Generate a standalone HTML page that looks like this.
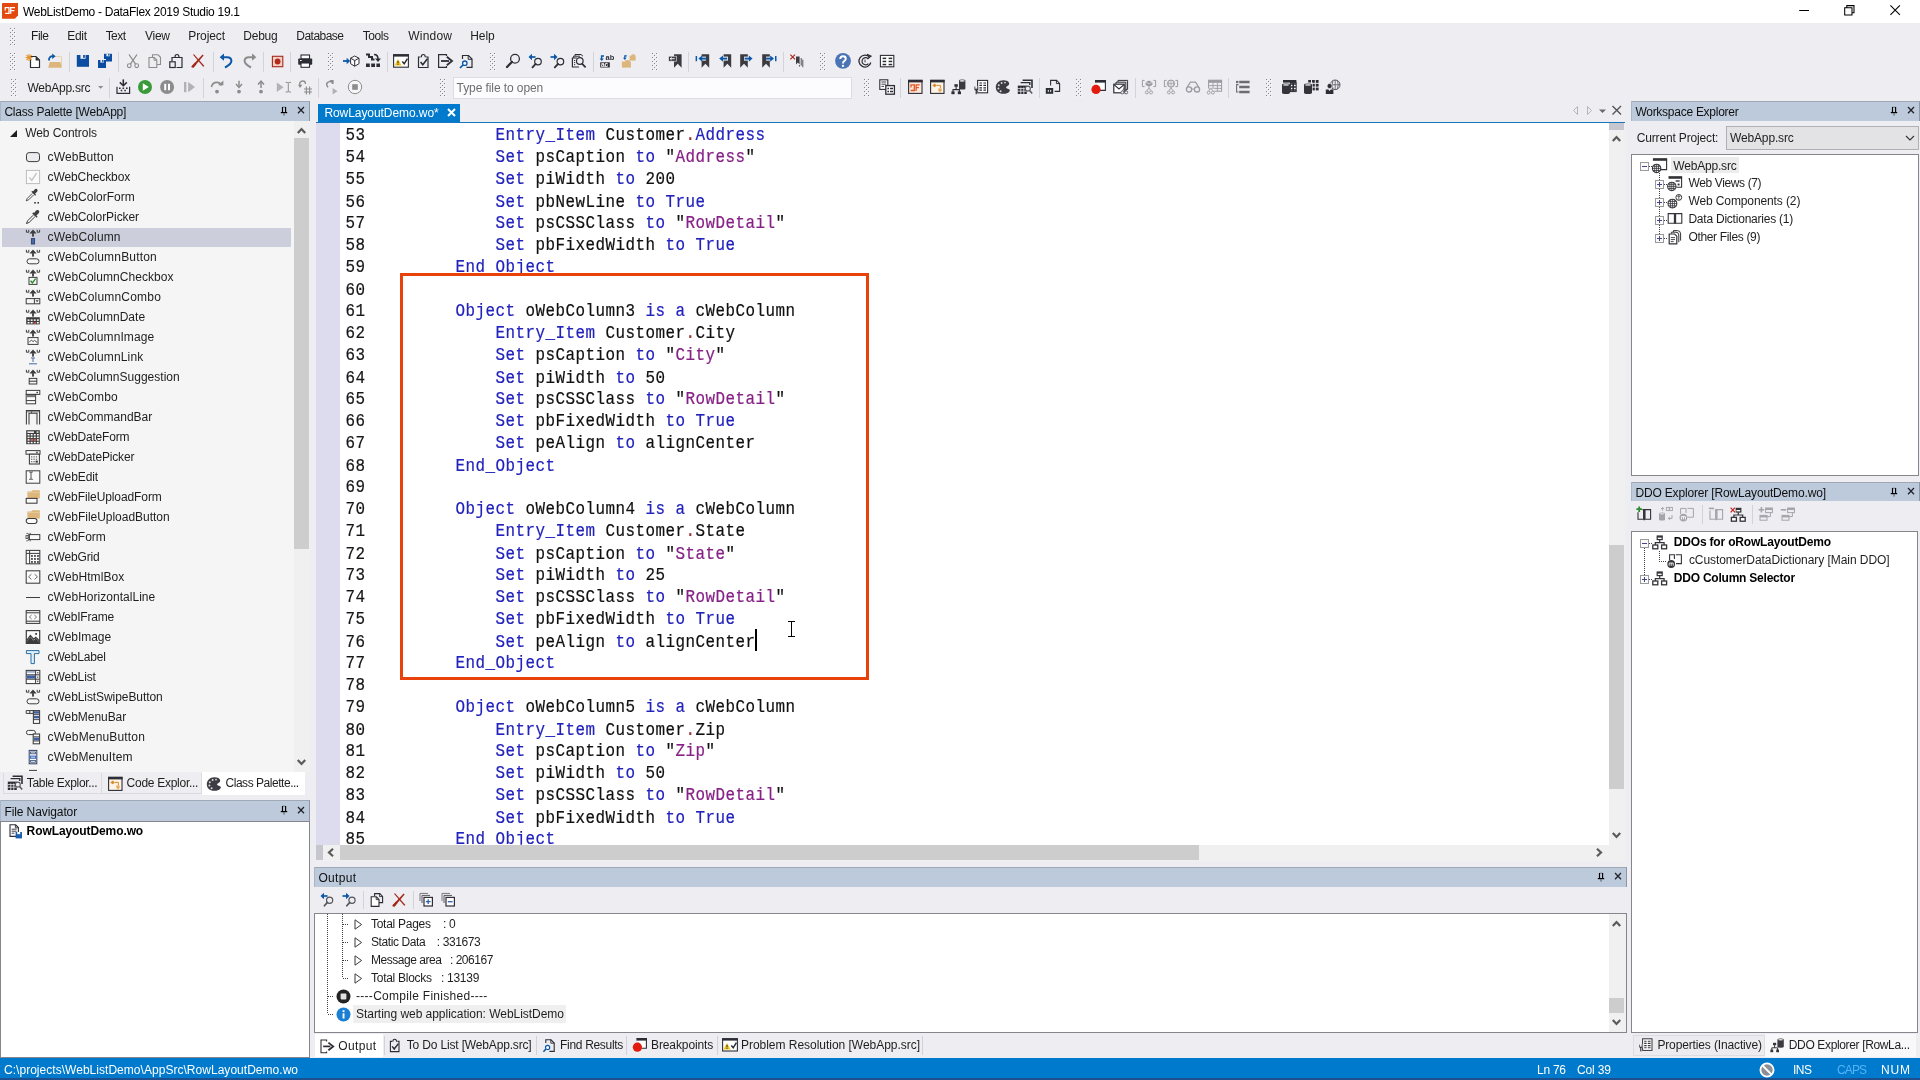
<!DOCTYPE html>
<html><head><meta charset="utf-8"><title>WebListDemo - DataFlex 2019 Studio 19.1</title>
<style>
html,body{margin:0;padding:0;}
body{width:1920px;height:1080px;overflow:hidden;position:relative;background:#eeeef2;font-family:"Liberation Sans",sans-serif;}
#r{position:absolute;left:0;top:0;width:1920px;height:1080px;will-change:transform;}
#r>div,#r>span,#r>svg{position:absolute;}
span{white-space:pre;display:block;}
svg{overflow:visible;}
</style></head><body><div id="r">
<div style="left:0px;top:0px;width:1920px;height:23px;background:#ffffff;"></div>
<svg style="left:2px;top:3px;" width="16" height="16" viewBox="0 0 16 16"><path d="M0 0.6Q0 0 0.6 0H16V12.6L12.8 15.8H0Z" fill="#e2490f"/><path d="M3.2 7.4V4.6H7V10.4H3.2M8.7 10.8V4.6H13M8.7 7.6H12.4" stroke="#fff" stroke-width="1.25" fill="none"/></svg>
<span style="left:23px;top:3.50px;font-size:12px;line-height:16px;color:#000;letter-spacing:-0.286px;">WebListDemo - DataFlex 2019 Studio 19.1</span>
<svg style="left:1799px;top:5px;" width="11" height="11" viewBox="0 0 11 11"><path d="M0.2 5.5H10" stroke="#000" stroke-width="1"/></svg>
<svg style="left:1844px;top:5px;" width="11" height="11" viewBox="0 0 11 11"><path d="M0.7 2.7H8V10H0.7Z M2.8 2.7V0.6H10V7.8H8" stroke="#000" stroke-width="1.05" fill="none"/></svg>
<svg style="left:1890px;top:5px;" width="11" height="11" viewBox="0 0 11 11"><path d="M0.4 0.3L9.9 9.9M9.9 0.3L0.4 9.9" stroke="#000" stroke-width="1.05"/></svg>
<svg style="left:10px;top:28px;" width="6" height="18" viewBox="0 0 6 18"><rect x="0" y="0" width="1" height="1" fill="#85858a"/><rect x="1" y="1" width="1" height="1" fill="#fafafc"/><rect x="4" y="0" width="1" height="1" fill="#85858a"/><rect x="5" y="1" width="1" height="1" fill="#fafafc"/><rect x="2" y="2" width="1" height="1" fill="#85858a"/><rect x="3" y="3" width="1" height="1" fill="#fafafc"/><rect x="0" y="4" width="1" height="1" fill="#85858a"/><rect x="1" y="5" width="1" height="1" fill="#fafafc"/><rect x="4" y="4" width="1" height="1" fill="#85858a"/><rect x="5" y="5" width="1" height="1" fill="#fafafc"/><rect x="2" y="6" width="1" height="1" fill="#85858a"/><rect x="3" y="7" width="1" height="1" fill="#fafafc"/><rect x="0" y="8" width="1" height="1" fill="#85858a"/><rect x="1" y="9" width="1" height="1" fill="#fafafc"/><rect x="4" y="8" width="1" height="1" fill="#85858a"/><rect x="5" y="9" width="1" height="1" fill="#fafafc"/><rect x="2" y="10" width="1" height="1" fill="#85858a"/><rect x="3" y="11" width="1" height="1" fill="#fafafc"/><rect x="0" y="12" width="1" height="1" fill="#85858a"/><rect x="1" y="13" width="1" height="1" fill="#fafafc"/><rect x="4" y="12" width="1" height="1" fill="#85858a"/><rect x="5" y="13" width="1" height="1" fill="#fafafc"/><rect x="2" y="14" width="1" height="1" fill="#85858a"/><rect x="3" y="15" width="1" height="1" fill="#fafafc"/><rect x="0" y="16" width="1" height="1" fill="#85858a"/><rect x="1" y="17" width="1" height="1" fill="#fafafc"/><rect x="4" y="16" width="1" height="1" fill="#85858a"/><rect x="5" y="17" width="1" height="1" fill="#fafafc"/></svg>
<span style="left:31px;top:27.50px;font-size:12px;line-height:16px;color:#1e1e1e;letter-spacing:-0.445px;">File</span>
<span style="left:67.3px;top:27.50px;font-size:12px;line-height:16px;color:#1e1e1e;letter-spacing:-0.326px;">Edit</span>
<span style="left:105.7px;top:27.50px;font-size:12px;line-height:16px;color:#1e1e1e;letter-spacing:-0.569px;">Text</span>
<span style="left:145px;top:27.50px;font-size:12px;line-height:16px;color:#1e1e1e;letter-spacing:-0.264px;">View</span>
<span style="left:188.3px;top:27.50px;font-size:12px;line-height:16px;color:#1e1e1e;letter-spacing:-0.108px;">Project</span>
<span style="left:243.3px;top:27.50px;font-size:12px;line-height:16px;color:#1e1e1e;letter-spacing:-0.240px;">Debug</span>
<span style="left:296.3px;top:27.50px;font-size:12px;line-height:16px;color:#1e1e1e;letter-spacing:-0.524px;">Database</span>
<span style="left:362.7px;top:27.50px;font-size:12px;line-height:16px;color:#1e1e1e;letter-spacing:-0.428px;">Tools</span>
<span style="left:408.3px;top:27.50px;font-size:12px;line-height:16px;color:#1e1e1e;letter-spacing:0.204px;">Window</span>
<span style="left:470.3px;top:27.50px;font-size:12px;line-height:16px;color:#1e1e1e;letter-spacing:-0.093px;">Help</span>
<svg style="left:10px;top:53px;" width="6" height="18" viewBox="0 0 6 18"><rect x="0" y="0" width="1" height="1" fill="#85858a"/><rect x="1" y="1" width="1" height="1" fill="#fafafc"/><rect x="4" y="0" width="1" height="1" fill="#85858a"/><rect x="5" y="1" width="1" height="1" fill="#fafafc"/><rect x="2" y="2" width="1" height="1" fill="#85858a"/><rect x="3" y="3" width="1" height="1" fill="#fafafc"/><rect x="0" y="4" width="1" height="1" fill="#85858a"/><rect x="1" y="5" width="1" height="1" fill="#fafafc"/><rect x="4" y="4" width="1" height="1" fill="#85858a"/><rect x="5" y="5" width="1" height="1" fill="#fafafc"/><rect x="2" y="6" width="1" height="1" fill="#85858a"/><rect x="3" y="7" width="1" height="1" fill="#fafafc"/><rect x="0" y="8" width="1" height="1" fill="#85858a"/><rect x="1" y="9" width="1" height="1" fill="#fafafc"/><rect x="4" y="8" width="1" height="1" fill="#85858a"/><rect x="5" y="9" width="1" height="1" fill="#fafafc"/><rect x="2" y="10" width="1" height="1" fill="#85858a"/><rect x="3" y="11" width="1" height="1" fill="#fafafc"/><rect x="0" y="12" width="1" height="1" fill="#85858a"/><rect x="1" y="13" width="1" height="1" fill="#fafafc"/><rect x="4" y="12" width="1" height="1" fill="#85858a"/><rect x="5" y="13" width="1" height="1" fill="#fafafc"/><rect x="2" y="14" width="1" height="1" fill="#85858a"/><rect x="3" y="15" width="1" height="1" fill="#fafafc"/><rect x="0" y="16" width="1" height="1" fill="#85858a"/><rect x="1" y="17" width="1" height="1" fill="#fafafc"/><rect x="4" y="16" width="1" height="1" fill="#85858a"/><rect x="5" y="17" width="1" height="1" fill="#fafafc"/></svg>
<svg style="left:328px;top:53px;" width="6" height="18" viewBox="0 0 6 18"><rect x="0" y="0" width="1" height="1" fill="#85858a"/><rect x="1" y="1" width="1" height="1" fill="#fafafc"/><rect x="4" y="0" width="1" height="1" fill="#85858a"/><rect x="5" y="1" width="1" height="1" fill="#fafafc"/><rect x="2" y="2" width="1" height="1" fill="#85858a"/><rect x="3" y="3" width="1" height="1" fill="#fafafc"/><rect x="0" y="4" width="1" height="1" fill="#85858a"/><rect x="1" y="5" width="1" height="1" fill="#fafafc"/><rect x="4" y="4" width="1" height="1" fill="#85858a"/><rect x="5" y="5" width="1" height="1" fill="#fafafc"/><rect x="2" y="6" width="1" height="1" fill="#85858a"/><rect x="3" y="7" width="1" height="1" fill="#fafafc"/><rect x="0" y="8" width="1" height="1" fill="#85858a"/><rect x="1" y="9" width="1" height="1" fill="#fafafc"/><rect x="4" y="8" width="1" height="1" fill="#85858a"/><rect x="5" y="9" width="1" height="1" fill="#fafafc"/><rect x="2" y="10" width="1" height="1" fill="#85858a"/><rect x="3" y="11" width="1" height="1" fill="#fafafc"/><rect x="0" y="12" width="1" height="1" fill="#85858a"/><rect x="1" y="13" width="1" height="1" fill="#fafafc"/><rect x="4" y="12" width="1" height="1" fill="#85858a"/><rect x="5" y="13" width="1" height="1" fill="#fafafc"/><rect x="2" y="14" width="1" height="1" fill="#85858a"/><rect x="3" y="15" width="1" height="1" fill="#fafafc"/><rect x="0" y="16" width="1" height="1" fill="#85858a"/><rect x="1" y="17" width="1" height="1" fill="#fafafc"/><rect x="4" y="16" width="1" height="1" fill="#85858a"/><rect x="5" y="17" width="1" height="1" fill="#fafafc"/></svg>
<svg style="left:490px;top:53px;" width="6" height="18" viewBox="0 0 6 18"><rect x="0" y="0" width="1" height="1" fill="#85858a"/><rect x="1" y="1" width="1" height="1" fill="#fafafc"/><rect x="4" y="0" width="1" height="1" fill="#85858a"/><rect x="5" y="1" width="1" height="1" fill="#fafafc"/><rect x="2" y="2" width="1" height="1" fill="#85858a"/><rect x="3" y="3" width="1" height="1" fill="#fafafc"/><rect x="0" y="4" width="1" height="1" fill="#85858a"/><rect x="1" y="5" width="1" height="1" fill="#fafafc"/><rect x="4" y="4" width="1" height="1" fill="#85858a"/><rect x="5" y="5" width="1" height="1" fill="#fafafc"/><rect x="2" y="6" width="1" height="1" fill="#85858a"/><rect x="3" y="7" width="1" height="1" fill="#fafafc"/><rect x="0" y="8" width="1" height="1" fill="#85858a"/><rect x="1" y="9" width="1" height="1" fill="#fafafc"/><rect x="4" y="8" width="1" height="1" fill="#85858a"/><rect x="5" y="9" width="1" height="1" fill="#fafafc"/><rect x="2" y="10" width="1" height="1" fill="#85858a"/><rect x="3" y="11" width="1" height="1" fill="#fafafc"/><rect x="0" y="12" width="1" height="1" fill="#85858a"/><rect x="1" y="13" width="1" height="1" fill="#fafafc"/><rect x="4" y="12" width="1" height="1" fill="#85858a"/><rect x="5" y="13" width="1" height="1" fill="#fafafc"/><rect x="2" y="14" width="1" height="1" fill="#85858a"/><rect x="3" y="15" width="1" height="1" fill="#fafafc"/><rect x="0" y="16" width="1" height="1" fill="#85858a"/><rect x="1" y="17" width="1" height="1" fill="#fafafc"/><rect x="4" y="16" width="1" height="1" fill="#85858a"/><rect x="5" y="17" width="1" height="1" fill="#fafafc"/></svg>
<svg style="left:652px;top:53px;" width="6" height="18" viewBox="0 0 6 18"><rect x="0" y="0" width="1" height="1" fill="#85858a"/><rect x="1" y="1" width="1" height="1" fill="#fafafc"/><rect x="4" y="0" width="1" height="1" fill="#85858a"/><rect x="5" y="1" width="1" height="1" fill="#fafafc"/><rect x="2" y="2" width="1" height="1" fill="#85858a"/><rect x="3" y="3" width="1" height="1" fill="#fafafc"/><rect x="0" y="4" width="1" height="1" fill="#85858a"/><rect x="1" y="5" width="1" height="1" fill="#fafafc"/><rect x="4" y="4" width="1" height="1" fill="#85858a"/><rect x="5" y="5" width="1" height="1" fill="#fafafc"/><rect x="2" y="6" width="1" height="1" fill="#85858a"/><rect x="3" y="7" width="1" height="1" fill="#fafafc"/><rect x="0" y="8" width="1" height="1" fill="#85858a"/><rect x="1" y="9" width="1" height="1" fill="#fafafc"/><rect x="4" y="8" width="1" height="1" fill="#85858a"/><rect x="5" y="9" width="1" height="1" fill="#fafafc"/><rect x="2" y="10" width="1" height="1" fill="#85858a"/><rect x="3" y="11" width="1" height="1" fill="#fafafc"/><rect x="0" y="12" width="1" height="1" fill="#85858a"/><rect x="1" y="13" width="1" height="1" fill="#fafafc"/><rect x="4" y="12" width="1" height="1" fill="#85858a"/><rect x="5" y="13" width="1" height="1" fill="#fafafc"/><rect x="2" y="14" width="1" height="1" fill="#85858a"/><rect x="3" y="15" width="1" height="1" fill="#fafafc"/><rect x="0" y="16" width="1" height="1" fill="#85858a"/><rect x="1" y="17" width="1" height="1" fill="#fafafc"/><rect x="4" y="16" width="1" height="1" fill="#85858a"/><rect x="5" y="17" width="1" height="1" fill="#fafafc"/></svg>
<svg style="left:820px;top:53px;" width="6" height="18" viewBox="0 0 6 18"><rect x="0" y="0" width="1" height="1" fill="#85858a"/><rect x="1" y="1" width="1" height="1" fill="#fafafc"/><rect x="4" y="0" width="1" height="1" fill="#85858a"/><rect x="5" y="1" width="1" height="1" fill="#fafafc"/><rect x="2" y="2" width="1" height="1" fill="#85858a"/><rect x="3" y="3" width="1" height="1" fill="#fafafc"/><rect x="0" y="4" width="1" height="1" fill="#85858a"/><rect x="1" y="5" width="1" height="1" fill="#fafafc"/><rect x="4" y="4" width="1" height="1" fill="#85858a"/><rect x="5" y="5" width="1" height="1" fill="#fafafc"/><rect x="2" y="6" width="1" height="1" fill="#85858a"/><rect x="3" y="7" width="1" height="1" fill="#fafafc"/><rect x="0" y="8" width="1" height="1" fill="#85858a"/><rect x="1" y="9" width="1" height="1" fill="#fafafc"/><rect x="4" y="8" width="1" height="1" fill="#85858a"/><rect x="5" y="9" width="1" height="1" fill="#fafafc"/><rect x="2" y="10" width="1" height="1" fill="#85858a"/><rect x="3" y="11" width="1" height="1" fill="#fafafc"/><rect x="0" y="12" width="1" height="1" fill="#85858a"/><rect x="1" y="13" width="1" height="1" fill="#fafafc"/><rect x="4" y="12" width="1" height="1" fill="#85858a"/><rect x="5" y="13" width="1" height="1" fill="#fafafc"/><rect x="2" y="14" width="1" height="1" fill="#85858a"/><rect x="3" y="15" width="1" height="1" fill="#fafafc"/><rect x="0" y="16" width="1" height="1" fill="#85858a"/><rect x="1" y="17" width="1" height="1" fill="#fafafc"/><rect x="4" y="16" width="1" height="1" fill="#85858a"/><rect x="5" y="17" width="1" height="1" fill="#fafafc"/></svg>
<svg style="left:11px;top:79px;" width="6" height="18" viewBox="0 0 6 18"><rect x="0" y="0" width="1" height="1" fill="#85858a"/><rect x="1" y="1" width="1" height="1" fill="#fafafc"/><rect x="4" y="0" width="1" height="1" fill="#85858a"/><rect x="5" y="1" width="1" height="1" fill="#fafafc"/><rect x="2" y="2" width="1" height="1" fill="#85858a"/><rect x="3" y="3" width="1" height="1" fill="#fafafc"/><rect x="0" y="4" width="1" height="1" fill="#85858a"/><rect x="1" y="5" width="1" height="1" fill="#fafafc"/><rect x="4" y="4" width="1" height="1" fill="#85858a"/><rect x="5" y="5" width="1" height="1" fill="#fafafc"/><rect x="2" y="6" width="1" height="1" fill="#85858a"/><rect x="3" y="7" width="1" height="1" fill="#fafafc"/><rect x="0" y="8" width="1" height="1" fill="#85858a"/><rect x="1" y="9" width="1" height="1" fill="#fafafc"/><rect x="4" y="8" width="1" height="1" fill="#85858a"/><rect x="5" y="9" width="1" height="1" fill="#fafafc"/><rect x="2" y="10" width="1" height="1" fill="#85858a"/><rect x="3" y="11" width="1" height="1" fill="#fafafc"/><rect x="0" y="12" width="1" height="1" fill="#85858a"/><rect x="1" y="13" width="1" height="1" fill="#fafafc"/><rect x="4" y="12" width="1" height="1" fill="#85858a"/><rect x="5" y="13" width="1" height="1" fill="#fafafc"/><rect x="2" y="14" width="1" height="1" fill="#85858a"/><rect x="3" y="15" width="1" height="1" fill="#fafafc"/><rect x="0" y="16" width="1" height="1" fill="#85858a"/><rect x="1" y="17" width="1" height="1" fill="#fafafc"/><rect x="4" y="16" width="1" height="1" fill="#85858a"/><rect x="5" y="17" width="1" height="1" fill="#fafafc"/></svg>
<svg style="left:440px;top:79px;" width="6" height="18" viewBox="0 0 6 18"><rect x="0" y="0" width="1" height="1" fill="#85858a"/><rect x="1" y="1" width="1" height="1" fill="#fafafc"/><rect x="4" y="0" width="1" height="1" fill="#85858a"/><rect x="5" y="1" width="1" height="1" fill="#fafafc"/><rect x="2" y="2" width="1" height="1" fill="#85858a"/><rect x="3" y="3" width="1" height="1" fill="#fafafc"/><rect x="0" y="4" width="1" height="1" fill="#85858a"/><rect x="1" y="5" width="1" height="1" fill="#fafafc"/><rect x="4" y="4" width="1" height="1" fill="#85858a"/><rect x="5" y="5" width="1" height="1" fill="#fafafc"/><rect x="2" y="6" width="1" height="1" fill="#85858a"/><rect x="3" y="7" width="1" height="1" fill="#fafafc"/><rect x="0" y="8" width="1" height="1" fill="#85858a"/><rect x="1" y="9" width="1" height="1" fill="#fafafc"/><rect x="4" y="8" width="1" height="1" fill="#85858a"/><rect x="5" y="9" width="1" height="1" fill="#fafafc"/><rect x="2" y="10" width="1" height="1" fill="#85858a"/><rect x="3" y="11" width="1" height="1" fill="#fafafc"/><rect x="0" y="12" width="1" height="1" fill="#85858a"/><rect x="1" y="13" width="1" height="1" fill="#fafafc"/><rect x="4" y="12" width="1" height="1" fill="#85858a"/><rect x="5" y="13" width="1" height="1" fill="#fafafc"/><rect x="2" y="14" width="1" height="1" fill="#85858a"/><rect x="3" y="15" width="1" height="1" fill="#fafafc"/><rect x="0" y="16" width="1" height="1" fill="#85858a"/><rect x="1" y="17" width="1" height="1" fill="#fafafc"/><rect x="4" y="16" width="1" height="1" fill="#85858a"/><rect x="5" y="17" width="1" height="1" fill="#fafafc"/></svg>
<svg style="left:864px;top:79px;" width="6" height="18" viewBox="0 0 6 18"><rect x="0" y="0" width="1" height="1" fill="#85858a"/><rect x="1" y="1" width="1" height="1" fill="#fafafc"/><rect x="4" y="0" width="1" height="1" fill="#85858a"/><rect x="5" y="1" width="1" height="1" fill="#fafafc"/><rect x="2" y="2" width="1" height="1" fill="#85858a"/><rect x="3" y="3" width="1" height="1" fill="#fafafc"/><rect x="0" y="4" width="1" height="1" fill="#85858a"/><rect x="1" y="5" width="1" height="1" fill="#fafafc"/><rect x="4" y="4" width="1" height="1" fill="#85858a"/><rect x="5" y="5" width="1" height="1" fill="#fafafc"/><rect x="2" y="6" width="1" height="1" fill="#85858a"/><rect x="3" y="7" width="1" height="1" fill="#fafafc"/><rect x="0" y="8" width="1" height="1" fill="#85858a"/><rect x="1" y="9" width="1" height="1" fill="#fafafc"/><rect x="4" y="8" width="1" height="1" fill="#85858a"/><rect x="5" y="9" width="1" height="1" fill="#fafafc"/><rect x="2" y="10" width="1" height="1" fill="#85858a"/><rect x="3" y="11" width="1" height="1" fill="#fafafc"/><rect x="0" y="12" width="1" height="1" fill="#85858a"/><rect x="1" y="13" width="1" height="1" fill="#fafafc"/><rect x="4" y="12" width="1" height="1" fill="#85858a"/><rect x="5" y="13" width="1" height="1" fill="#fafafc"/><rect x="2" y="14" width="1" height="1" fill="#85858a"/><rect x="3" y="15" width="1" height="1" fill="#fafafc"/><rect x="0" y="16" width="1" height="1" fill="#85858a"/><rect x="1" y="17" width="1" height="1" fill="#fafafc"/><rect x="4" y="16" width="1" height="1" fill="#85858a"/><rect x="5" y="17" width="1" height="1" fill="#fafafc"/></svg>
<svg style="left:1076px;top:79px;" width="6" height="18" viewBox="0 0 6 18"><rect x="0" y="0" width="1" height="1" fill="#85858a"/><rect x="1" y="1" width="1" height="1" fill="#fafafc"/><rect x="4" y="0" width="1" height="1" fill="#85858a"/><rect x="5" y="1" width="1" height="1" fill="#fafafc"/><rect x="2" y="2" width="1" height="1" fill="#85858a"/><rect x="3" y="3" width="1" height="1" fill="#fafafc"/><rect x="0" y="4" width="1" height="1" fill="#85858a"/><rect x="1" y="5" width="1" height="1" fill="#fafafc"/><rect x="4" y="4" width="1" height="1" fill="#85858a"/><rect x="5" y="5" width="1" height="1" fill="#fafafc"/><rect x="2" y="6" width="1" height="1" fill="#85858a"/><rect x="3" y="7" width="1" height="1" fill="#fafafc"/><rect x="0" y="8" width="1" height="1" fill="#85858a"/><rect x="1" y="9" width="1" height="1" fill="#fafafc"/><rect x="4" y="8" width="1" height="1" fill="#85858a"/><rect x="5" y="9" width="1" height="1" fill="#fafafc"/><rect x="2" y="10" width="1" height="1" fill="#85858a"/><rect x="3" y="11" width="1" height="1" fill="#fafafc"/><rect x="0" y="12" width="1" height="1" fill="#85858a"/><rect x="1" y="13" width="1" height="1" fill="#fafafc"/><rect x="4" y="12" width="1" height="1" fill="#85858a"/><rect x="5" y="13" width="1" height="1" fill="#fafafc"/><rect x="2" y="14" width="1" height="1" fill="#85858a"/><rect x="3" y="15" width="1" height="1" fill="#fafafc"/><rect x="0" y="16" width="1" height="1" fill="#85858a"/><rect x="1" y="17" width="1" height="1" fill="#fafafc"/><rect x="4" y="16" width="1" height="1" fill="#85858a"/><rect x="5" y="17" width="1" height="1" fill="#fafafc"/></svg>
<svg style="left:1266px;top:79px;" width="6" height="18" viewBox="0 0 6 18"><rect x="0" y="0" width="1" height="1" fill="#85858a"/><rect x="1" y="1" width="1" height="1" fill="#fafafc"/><rect x="4" y="0" width="1" height="1" fill="#85858a"/><rect x="5" y="1" width="1" height="1" fill="#fafafc"/><rect x="2" y="2" width="1" height="1" fill="#85858a"/><rect x="3" y="3" width="1" height="1" fill="#fafafc"/><rect x="0" y="4" width="1" height="1" fill="#85858a"/><rect x="1" y="5" width="1" height="1" fill="#fafafc"/><rect x="4" y="4" width="1" height="1" fill="#85858a"/><rect x="5" y="5" width="1" height="1" fill="#fafafc"/><rect x="2" y="6" width="1" height="1" fill="#85858a"/><rect x="3" y="7" width="1" height="1" fill="#fafafc"/><rect x="0" y="8" width="1" height="1" fill="#85858a"/><rect x="1" y="9" width="1" height="1" fill="#fafafc"/><rect x="4" y="8" width="1" height="1" fill="#85858a"/><rect x="5" y="9" width="1" height="1" fill="#fafafc"/><rect x="2" y="10" width="1" height="1" fill="#85858a"/><rect x="3" y="11" width="1" height="1" fill="#fafafc"/><rect x="0" y="12" width="1" height="1" fill="#85858a"/><rect x="1" y="13" width="1" height="1" fill="#fafafc"/><rect x="4" y="12" width="1" height="1" fill="#85858a"/><rect x="5" y="13" width="1" height="1" fill="#fafafc"/><rect x="2" y="14" width="1" height="1" fill="#85858a"/><rect x="3" y="15" width="1" height="1" fill="#fafafc"/><rect x="0" y="16" width="1" height="1" fill="#85858a"/><rect x="1" y="17" width="1" height="1" fill="#fafafc"/><rect x="4" y="16" width="1" height="1" fill="#85858a"/><rect x="5" y="17" width="1" height="1" fill="#fafafc"/></svg>
<div style="left:68.5px;top:52px;width:1px;height:20px;background:#d3d3da;"></div>
<div style="left:118.3px;top:52px;width:1px;height:20px;background:#d3d3da;"></div>
<div style="left:212.5px;top:52px;width:1px;height:20px;background:#d3d3da;"></div>
<div style="left:262.5px;top:52px;width:1px;height:20px;background:#d3d3da;"></div>
<div style="left:290.4px;top:52px;width:1px;height:20px;background:#d3d3da;"></div>
<div style="left:386.6px;top:52px;width:1px;height:20px;background:#d3d3da;"></div>
<div style="left:592.6px;top:52px;width:1px;height:20px;background:#d3d3da;"></div>
<div style="left:688.4px;top:52px;width:1px;height:20px;background:#d3d3da;"></div>
<div style="left:782.5px;top:52px;width:1px;height:20px;background:#d3d3da;"></div>
<div style="left:108.5px;top:78.4px;width:1px;height:20px;background:#d3d3da;"></div>
<div style="left:202.8px;top:78.4px;width:1px;height:20px;background:#d3d3da;"></div>
<div style="left:318.4px;top:78.4px;width:1px;height:20px;background:#d3d3da;"></div>
<div style="left:900.4px;top:78.4px;width:1px;height:20px;background:#d3d3da;"></div>
<div style="left:1038.5px;top:78.4px;width:1px;height:20px;background:#d3d3da;"></div>
<div style="left:1134.5px;top:78.4px;width:1px;height:20px;background:#d3d3da;"></div>
<div style="left:1228.4px;top:78.4px;width:1px;height:20px;background:#d3d3da;"></div>
<svg style="left:25px;top:53px;" width="16" height="16" viewBox="0 0 16 16"><path d="M5.5 3.5H11L14.5 7V14.5H5.5Z" fill="#fff" stroke="#2d2d36" stroke-width="1.2"/><path d="M10.6 3.5V7.4H14.5Z" fill="#2d2d36"/><path d="M4 1V8M0.5 4.5H7.5M1.5 2L6.5 7M6.5 2L1.5 7" stroke="#e8952f" stroke-width="1.1"/></svg>
<svg style="left:47px;top:53px;" width="16" height="16" viewBox="0 0 16 16"><path d="M7.5 3.5H14.5V13.5" fill="none" stroke="#e9d3a8" stroke-width="1"/><path d="M1.2 14.7L2.6 9H13.4L14.8 14.7Z" fill="#dcb67a"/><path d="M2 7.5Q1.6 3.2 6 3.2" fill="none" stroke="#0b58a8" stroke-width="1.8"/><path d="M5.2 0.4L8.6 3.2L5.2 6Z" fill="#0b58a8"/></svg>
<svg style="left:75px;top:53px;" width="16" height="16" viewBox="0 0 16 16"><rect x="1.8" y="2" width="12.2" height="11.8" fill="#0b4da0"/><rect x="5.46" y="2" width="5.12" height="3.78" fill="#eeeef2"/><rect x="8.14" y="2" width="1.71" height="2.83" fill="#0b4da0"/></svg>
<svg style="left:97px;top:53px;" width="16" height="16" viewBox="0 0 16 16"><rect x="7" y="0.8" width="8" height="7.7" fill="#0b4da0"/><rect x="9.40" y="0.8" width="3.36" height="2.46" fill="#eeeef2"/><rect x="11.16" y="0.8" width="1.12" height="1.85" fill="#0b4da0"/><rect x="6" y="6" width="3" height="3.5" fill="#eeeef2"/><rect x="1" y="7" width="8" height="8" fill="#0b4da0"/><rect x="3.40" y="7" width="3.36" height="2.56" fill="#eeeef2"/><rect x="5.16" y="7" width="1.12" height="1.92" fill="#0b4da0"/></svg>
<svg style="left:125px;top:53px;" width="16" height="16" viewBox="0 0 16 16"><circle cx="4.3" cy="12.7" r="1.9" fill="none" stroke="#8c8c8c" stroke-width="1.1"/><circle cx="11.7" cy="12.7" r="1.9" fill="none" stroke="#8c8c8c" stroke-width="1.1"/><path d="M4 1.5L10.6 11.2M12 1.5L5.4 11.2" stroke="#8c8c8c" stroke-width="1.3" fill="none"/></svg>
<svg style="left:147px;top:53px;" width="16" height="16" viewBox="0 0 16 16"><path d="M5.5 4V1.8H11L13.5 4.3V11.5H10" fill="none" stroke="#8c8c8c" stroke-width="1.1"/><path d="M2 4.5H7.3L9.8 7V14.5H2Z" fill="none" stroke="#8c8c8c" stroke-width="1.1"/><path d="M7 4.7V7.3H9.6" fill="none" stroke="#8c8c8c" stroke-width="0.9"/></svg>
<svg style="left:168px;top:53px;" width="16" height="16" viewBox="0 0 16 16"><path d="M4 8V4.5H14V14.5H8.5" fill="none" stroke="#2d2d36" stroke-width="1.2"/><path d="M7 4.3Q7 1.5 9 1.5Q11 1.5 11 4.3" fill="none" stroke="#2d2d36" stroke-width="1.2"/><rect x="1.8" y="8.8" width="5.4" height="5.7" fill="none" stroke="#2d2d36" stroke-width="1.2"/></svg>
<svg style="left:190px;top:53px;" width="16" height="16" viewBox="0 0 16 16"><path d="M1.6 13.2L3.6 14.6L13.6 2.6L12.6 1.4Z" fill="#a5281b"/><path d="M3 1.8L4 1.2L14.4 13L13.2 13.8Z" fill="#a5281b"/><path d="M1.4 13.4Q1 14.8 3.4 14.8L6.5 11L5 9.4Z" fill="#a5281b"/></svg>
<svg style="left:219px;top:53px;" width="16" height="16" viewBox="0 0 16 16"><path d="M3 4.2H8Q12.4 4.2 12.4 8Q12.4 11 6 14.5" fill="none" stroke="#0b58a8" stroke-width="2"/><path d="M0.6 4.2L5 0.6V7.8Z" fill="#0b58a8"/></svg>
<svg style="left:241px;top:53px;transform:scaleX(-1)" width="16" height="16" viewBox="0 0 16 16"><path d="M3 4.2H8Q12.4 4.2 12.4 8Q12.4 11 6 14.5" fill="none" stroke="#8c8c8c" stroke-width="2"/><path d="M0.6 4.2L5 0.6V7.8Z" fill="#8c8c8c"/></svg>
<svg style="left:269px;top:53px;" width="16" height="16" viewBox="0 0 16 16"><rect x="3.4" y="3.3" width="10.4" height="10.4" fill="#f3cfc6" stroke="#a5281b" stroke-width="1.1"/><circle cx="8.6" cy="8.5" r="2.9" fill="#b32a1a"/></svg>
<svg style="left:297px;top:53px;" width="16" height="16" viewBox="0 0 16 16"><rect x="4" y="2" width="8.5" height="4" fill="#fff" stroke="#2d2d36" stroke-width="1.1"/><rect x="1.2" y="5.5" width="14" height="6.3" rx="0.8" fill="#2d2d36"/><rect x="4" y="10" width="8.5" height="4.3" fill="#fff" stroke="#2d2d36" stroke-width="1.1"/><rect x="3" y="7" width="1.6" height="1" fill="#fff"/></svg>
<svg style="left:343px;top:53px;" width="16" height="16" viewBox="0 0 16 16"><path d="M0 8H4.5" stroke="#0b58a8" stroke-width="1.8"/><path d="M3.6 4.8L7.2 8L3.6 11.2Z" fill="#0b58a8"/><path d="M11.7 3L16 5.2V10.7L11.7 13.2L7.6 10.7V5.2ZM7.6 5.2L11.7 7.6L16 5.2M11.7 7.6V13.2" fill="#fff" stroke="#2d2d36" stroke-width="1"/></svg>
<svg style="left:365px;top:53px;" width="16" height="16" viewBox="0 0 16 16"><path d="M1 1.5H4V4H7V6.5H9.5" fill="none" stroke="#2d2d36" stroke-width="2"/><path d="M9 1.5Q13 1.5 13 6" fill="none" stroke="#2d2d36" stroke-width="1.6"/><path d="M10 5.5H16L13 9Z" fill="#2d2d36"/><path d="M1 12.3H15" stroke="#2d2d36" stroke-width="3.4" stroke-dasharray="3.8 1.4"/></svg>
<svg style="left:393px;top:53px;" width="16" height="16" viewBox="0 0 16 16"><rect x="0.6" y="1.8" width="14.8" height="12.4" fill="#fff" stroke="#2d2d36" stroke-width="1.1"/><rect x="0" y="1.2" width="16" height="2.4" fill="#2d2d36"/><path d="M5 6L8.6 12.5H1.4Z" fill="#f2c21a"/><rect x="4.5" y="7.8" width="1" height="2.4" fill="#2d2d36"/><rect x="4.5" y="10.8" width="1" height="1" fill="#2d2d36"/><path d="M9.3 8.6L11.2 10.8L14.4 5.6" fill="none" stroke="#2d2d36" stroke-width="1.5"/></svg>
<svg style="left:415px;top:53px;" width="16" height="16" viewBox="0 0 16 16"><path d="M5.5 4H3.5V14.5H13V4H11" fill="none" stroke="#2d2d36" stroke-width="1.2"/><path d="M6.3 4.3Q6.3 1.5 8.3 1.5Q10.3 1.5 10.3 4.3" fill="none" stroke="#2d2d36" stroke-width="1.2"/><path d="M5.6 9L7.8 11.8L12.4 5.8" fill="none" stroke="#2d2d36" stroke-width="1.6"/></svg>
<svg style="left:437px;top:53px;" width="16" height="16" viewBox="0 0 16 16"><path d="M9.5 3V1.6H1.6V14.4H9.5V13" fill="none" stroke="#2d2d36" stroke-width="1.2"/><path d="M4 8H12" stroke="#2d2d36" stroke-width="1.8"/><path d="M9.8 3.8L15 8L9.8 12.2" fill="none" stroke="#2d2d36" stroke-width="1.8"/></svg>
<svg style="left:458px;top:53px;" width="16" height="16" viewBox="0 0 16 16"><path d="M4.5 6V2.5H10.5L14 6V14.3H8.5" fill="none" stroke="#2d2d36" stroke-width="1.2"/><path d="M10.2 2.5V6.3H14" fill="none" stroke="#2d2d36" stroke-width="1"/><circle cx="6.8" cy="10.2" r="2.2" fill="#fff" stroke="#0b58a8" stroke-width="1.3"/><path d="M5 12L2 15" stroke="#0b58a8" stroke-width="1.7"/></svg>
<svg style="left:505px;top:53px;" width="16" height="16" viewBox="0 0 16 16"><circle cx="10" cy="5.8" r="4.4" fill="none" stroke="#2d2d36" stroke-width="1.3"/><path d="M6.9 8.9L2 14" stroke="#2d2d36" stroke-width="2.2" stroke-linecap="round"/></svg>
<svg style="left:528px;top:53px;" width="16" height="16" viewBox="0 0 16 16"><path d="M3 4H7.5" stroke="#0b58a8" stroke-width="1.7"/><path d="M0.5 4L4 0.8V7.2Z" fill="#0b58a8"/><circle cx="10" cy="8.6" r="3.3" fill="none" stroke="#2d2d36" stroke-width="1.2"/><path d="M7.7 10.9L4.5 14.3" stroke="#2d2d36" stroke-width="1.8" stroke-linecap="round"/></svg>
<svg style="left:550px;top:53px;" width="16" height="16" viewBox="0 0 16 16"><path d="M0.5 4H5" stroke="#0b58a8" stroke-width="1.7"/><path d="M7.5 4L4 0.8V7.2Z" fill="#0b58a8"/><circle cx="10.4" cy="8.6" r="3.3" fill="none" stroke="#2d2d36" stroke-width="1.2"/><path d="M8.1 10.9L4.8 14.3" stroke="#2d2d36" stroke-width="1.8" stroke-linecap="round"/></svg>
<svg style="left:571px;top:53px;" width="16" height="16" viewBox="0 0 16 16"><path d="M4 3V1.5H10L12 3.2" fill="none" stroke="#2d2d36" stroke-width="1"/><path d="M2.6 5V3.2H9" fill="none" stroke="#2d2d36" stroke-width="1"/><path d="M6 5H1.4V14H8" fill="none" stroke="#2d2d36" stroke-width="1.2"/><path d="M3 7.5H4.2M3 9.6H4.2M3 11.7H4.2" stroke="#2d2d36" stroke-width="1"/><circle cx="8.8" cy="8" r="3.3" fill="#eeeef2" stroke="#2d2d36" stroke-width="1.2"/><path d="M11 10.6L14.6 14.4" stroke="#2d2d36" stroke-width="1.7"/></svg>
<svg style="left:599px;top:53px;" width="16" height="16" viewBox="0 0 16 16"><path d="M5 3H2.6V6.5" fill="none" stroke="#0b58a8" stroke-width="1.4"/><path d="M0.6 5.6H4.8L2.7 8Z" fill="#0b58a8"/><text x="6.6" y="6.6" font-size="7.5" font-weight="bold" font-family="Liberation Sans" fill="#2d2d36">ab</text><rect x="1.2" y="9.3" width="9.6" height="5.2" fill="#2d2d36"/><text x="2" y="14" font-size="6.5" font-weight="bold" font-family="Liberation Sans" fill="#fff">ac</text></svg>
<svg style="left:621px;top:53px;" width="16" height="16" viewBox="0 0 16 16"><rect x="8.6" y="2.6" width="6" height="5" fill="#dcb67a"/><rect x="10.6" y="1.4" width="3.4" height="1.6" fill="#dcb67a"/><rect x="0.9" y="8.6" width="9" height="6" fill="#dcb67a"/><rect x="4" y="7.2" width="5" height="1.8" fill="#dcb67a"/><path d="M5.8 2.8H3.8V5.8" fill="none" stroke="#0b58a8" stroke-width="1.2"/><path d="M2 4.8H5.6L3.8 7Z" fill="#0b58a8"/></svg>
<svg style="left:667px;top:53px;" width="16" height="16" viewBox="0 0 16 16"><path d="M7 1.2H14.6V14.8L10.8 10.8L7 14.8Z" fill="#3a3a40"/><rect x="1.6" y="3.2" width="8" height="5" fill="#3a3a40" stroke="#eeeef2" stroke-width="0.6"/><path d="M3 5.7H7.8M4.8 4.4L3.2 5.7L4.8 7" stroke="#fff" stroke-width="0.9" fill="none"/></svg>
<svg style="left:695px;top:53px;" width="16" height="16" viewBox="0 0 16 16"><path d="M6.6 1.2H14.2V14.8L10.399999999999999 10.8L6.6 14.8Z" fill="#3a3a40"/><rect x="4" y="3.6" width="7" height="4" fill="#eeeef2"/><path d="M6.4 5.6H11.4" stroke="#0b58a8" stroke-width="1.9"/><path d="M3.4 5.6L7.199999999999999 2.4V8.8Z" fill="#0b58a8"/><rect x="0.6" y="3" width="1.5" height="5.2" fill="#0b58a8"/></svg>
<svg style="left:717px;top:53px;" width="16" height="16" viewBox="0 0 16 16"><path d="M6.6 1.2H14.2V14.8L10.399999999999999 10.8L6.6 14.8Z" fill="#3a3a40"/><rect x="4" y="3.6" width="7" height="4" fill="#eeeef2"/><path d="M5.2 5.6H10.2" stroke="#0b58a8" stroke-width="1.9"/><path d="M2.2 5.6L6.0 2.4V8.8Z" fill="#0b58a8"/></svg>
<svg style="left:739px;top:53px;" width="16" height="16" viewBox="0 0 16 16"><path d="M1.2 1.2H8.799999999999999V14.8L5.0 10.8L1.2 14.8Z" fill="#3a3a40"/><rect x="5" y="3.6" width="6" height="4" fill="#eeeef2"/><path d="M5.6 5.6H10.6" stroke="#0b58a8" stroke-width="1.9"/><path d="M13.6 5.6L9.8 2.4V8.8Z" fill="#0b58a8"/></svg>
<svg style="left:761px;top:53px;" width="16" height="16" viewBox="0 0 16 16"><path d="M1.2 1.2H8.799999999999999V14.8L5.0 10.8L1.2 14.8Z" fill="#3a3a40"/><rect x="5" y="3.6" width="6" height="4" fill="#eeeef2"/><path d="M5 5.6H10" stroke="#0b58a8" stroke-width="1.9"/><path d="M13 5.6L9.2 2.4V8.8Z" fill="#0b58a8"/><rect x="14" y="3" width="1.5" height="5.2" fill="#0b58a8"/></svg>
<svg style="left:789px;top:53px;" width="16" height="16" viewBox="0 0 16 16"><path d="M1.4 1.6L6 6.4M6 1.6L1.4 6.4" stroke="#b02a20" stroke-width="1.2"/><path d="M7 3.4H10.6V11.4L8.8 9.6L7 11.4Z" fill="#3a3a40"/><path d="M12.2 5V12.6M13.8 6.6V14.2M10.4 12V13.6" stroke="#55555c" stroke-width="1"/></svg>
<svg style="left:835px;top:53px;" width="16" height="16" viewBox="0 0 16 16"><circle cx="8" cy="7.9" r="7.9" fill="#4a74b4"/><path d="M5.2 6Q5.2 3.2 8 3.2Q10.8 3.2 10.8 5.7Q10.8 7.2 9.2 8.1Q8 8.8 8 10.4" fill="none" stroke="#fff" stroke-width="1.9"/><circle cx="8" cy="12.9" r="1.15" fill="#fff"/></svg>
<svg style="left:857px;top:53px;" width="16" height="16" viewBox="0 0 16 16"><path d="M12.6 4.2A6 6 0 1 0 13.8 9.5" fill="none" stroke="#2d2d36" stroke-width="1.3"/><path d="M11.4 6A3.6 3.6 0 1 0 11.4 10.6" fill="none" stroke="#2d2d36" stroke-width="1.2"/><path d="M10 1.4L14 3.2L10.6 5.8" fill="none" stroke="#2d2d36" stroke-width="1.2"/><path d="M8 6.6V9.4" stroke="#2d2d36" stroke-width="0.9"/></svg>
<svg style="left:879px;top:53px;" width="16" height="16" viewBox="0 0 16 16"><rect x="1.4" y="2.4" width="13.4" height="11.4" fill="#fff" stroke="#2d2d36" stroke-width="1.1"/><rect x="3.6" y="4.6" width="3.6" height="1.5" fill="#2d2d36"/><rect x="3.6" y="7.7" width="3.6" height="1.5" fill="#2d2d36"/><rect x="3.6" y="10.8" width="3.6" height="1.5" fill="#2d2d36"/><rect x="9.6" y="4.6" width="3.6" height="1.5" fill="#2d2d36"/><rect x="9.6" y="7.7" width="3.6" height="1.5" fill="#2d2d36"/><rect x="9.6" y="10.8" width="3.6" height="1.5" fill="#2d2d36"/></svg>
<span style="left:27.5px;top:79.60px;font-size:12px;line-height:16px;color:#1e1e1e;letter-spacing:-0.248px;">WebApp.src</span>
<svg style="left:98px;top:85.5px;" width="6" height="3" viewBox="0 0 6 3"><path d="M0 0H5.4L2.7 2.8Z" fill="#8c8c8c"/></svg>
<svg style="left:115px;top:79px;" width="16" height="16" viewBox="0 0 16 16"><path d="M2 7.8V14.3H14.6V7.8" fill="none" stroke="#2d2d36" stroke-width="1.2"/><path d="M8.3 0.4V6" stroke="#2d2d36" stroke-width="1.6"/><path d="M4.8 3.4L8.3 6.8L11.8 3.4" fill="none" stroke="#2d2d36" stroke-width="1.5"/><path d="M4 9.2H5.6M7.5 9.2H9.1M11 9.2H12.6M5.7 11.6H7.3M9.3 11.6H10.9" stroke="#2d2d36" stroke-width="1.5"/></svg>
<svg style="left:137px;top:79px;" width="16" height="16" viewBox="0 0 16 16"><circle cx="8" cy="8" r="7" fill="#3a9a3a"/><path d="M5.8 4.2L11.8 8L5.8 11.8Z" fill="#fff"/></svg>
<svg style="left:159px;top:79px;" width="16" height="16" viewBox="0 0 16 16"><circle cx="8.1" cy="8" r="7" fill="#8c8c8c"/><rect x="5.2" y="4.8" width="2" height="6.4" fill="#fff"/><rect x="9" y="4.8" width="2" height="6.4" fill="#fff"/></svg>
<svg style="left:181px;top:79px;" width="16" height="16" viewBox="0 0 16 16"><rect x="3" y="3" width="2.4" height="10.2" fill="#b2b2b6"/><path d="M7.2 3L14 8.1L7.2 13.2Z" fill="#b2b2b6"/></svg>
<svg style="left:209px;top:79px;" width="16" height="16" viewBox="0 0 16 16"><path d="M2.4 8Q3.4 3.4 8 3.4Q11.4 3.4 12.4 6.6" fill="none" stroke="#8c8c8c" stroke-width="1.6"/><path d="M9 6.2H14.4V1.6Z" fill="#8c8c8c"/><circle cx="8" cy="12.6" r="1.9" fill="#8c8c8c"/></svg>
<svg style="left:231px;top:79px;" width="16" height="16" viewBox="0 0 16 16"><path d="M8 1.8V7.6" stroke="#8c8c8c" stroke-width="1.5"/><path d="M5 5L8 8.4L11 5" fill="none" stroke="#8c8c8c" stroke-width="1.5"/><circle cx="8" cy="12.6" r="1.9" fill="#8c8c8c"/></svg>
<svg style="left:253px;top:79px;" width="16" height="16" viewBox="0 0 16 16"><path d="M8 3V9" stroke="#8c8c8c" stroke-width="1.5"/><path d="M5 5.6L8 2.2L11 5.6" fill="none" stroke="#8c8c8c" stroke-width="1.5"/><circle cx="8" cy="12.6" r="1.9" fill="#8c8c8c"/></svg>
<svg style="left:276px;top:79px;" width="16" height="16" viewBox="0 0 16 16"><path d="M0.8 3.4L7.6 8.2L0.8 13Z" fill="#b2b2b6"/><path d="M9.6 3.4H11.4Q12.3 3.4 12.3 4.4Q12.3 3.4 13.2 3.4H15M9.6 13H11.4Q12.3 13 12.3 12Q12.3 13 13.2 13H15M12.3 4.4V12" fill="none" stroke="#8c8c8c" stroke-width="1"/></svg>
<svg style="left:297px;top:79px;" width="16" height="16" viewBox="0 0 16 16"><path d="M3 6.8Q1.8 2 6 2Q8.6 2 8.4 5" fill="none" stroke="#8c8c8c" stroke-width="1.4"/><path d="M1 5.8H5.4L3 9Z" fill="#8c8c8c"/><path d="M7 10H15M7 13H15M9.4 7.6V15.4M12.6 7.6V15.4" stroke="#8c8c8c" stroke-width="1.1"/></svg>
<svg style="left:324px;top:79px;" width="16" height="16" viewBox="0 0 16 16"><path d="M4 8.4Q0.6 4 5.4 2.6Q8.4 2 8.6 5" fill="none" stroke="#8c8c8c" stroke-width="1.5"/><path d="M5.6 1H9.6V5Z" fill="#8c8c8c"/><path d="M8.6 9L13.6 12.2L8.6 15.4Z" fill="#b2b2b6"/></svg>
<svg style="left:347px;top:79px;" width="16" height="16" viewBox="0 0 16 16"><circle cx="8" cy="8" r="6.7" fill="#f6f6f8" stroke="#8c8c8c" stroke-width="1"/><rect x="5.2" y="5.2" width="5.6" height="5.6" fill="#8c8c8c"/></svg>
<div style="left:452.5px;top:77px;width:399.5px;height:21.5px;background:#fcfcfe;border:1px solid #dcdce2;box-sizing:border-box;"></div>
<span style="left:456.6px;top:79.80px;font-size:12px;line-height:16px;color:#6e6e6e;letter-spacing:-0.085px;">Type file to open</span>
<svg style="left:879px;top:79px;" width="16" height="16" viewBox="0 0 16 16"><rect x="0.8" y="0.8" width="8" height="9.6" fill="#fff" stroke="#2d2d36" stroke-width="1.1"/><path d="M2.4 3H7.2M2.4 5.2H7.2M2.4 7.4H5" stroke="#2d2d36" stroke-width="0.9"/><rect x="6.8" y="6.6" width="8.6" height="8.6" fill="#fff" stroke="#2d2d36" stroke-width="1.3"/><path d="M8.4 9.6H10M11 9.6H14M8.4 12.4H10M11 12.4H14" stroke="#2d2d36" stroke-width="1.5"/></svg>
<svg style="left:908px;top:79px;" width="16" height="16" viewBox="0 0 16 16"><rect x="0.6" y="1.4" width="13.4" height="13" fill="#fbe9e2" stroke="#2d2d36" stroke-width="1.1"/><rect x="0" y="0.8" width="14.6" height="2.6" fill="#2d2d36"/><path d="M3 8.4V5.9H6.3V11.5H2.6M8.1 11.9V5.9H11.7M8.1 8.7H10.9" stroke="#e2561c" stroke-width="1.3" fill="none"/></svg>
<svg style="left:930px;top:79px;" width="16" height="16" viewBox="0 0 16 16"><rect x="0.6" y="1.4" width="13.4" height="13" fill="#fdf3e7" stroke="#2d2d36" stroke-width="1.1"/><rect x="0" y="0.8" width="14.6" height="2.6" fill="#2d2d36"/><path d="M2.4 6.4L4.6 4.6L7 6.4L4.6 8.2Z" fill="#d98a2a"/><path d="M7 6.4H10.4V9" stroke="#d98a2a" stroke-width="1" fill="none"/><path d="M8.4 9.4H11.6V12.2H8.4Z" fill="#e3a85a"/><path d="M10 12.2V13.4" stroke="#d98a2a" stroke-width="1"/></svg>
<svg style="left:951px;top:79px;" width="16" height="16" viewBox="0 0 16 16"><path d="M8 1.6Q8 0.6 11.2 0.6Q14.4 0.6 14.4 1.6V9.4Q14.4 10.6 11.2 10.6Q8 10.6 8 9.4Z" fill="#3a3a40"/><ellipse cx="11.2" cy="1.9" rx="2.6" ry="0.8" fill="#dcdce0"/><rect x="3.4" y="5.2" width="3.4" height="2.6" fill="#2d2d36"/><path d="M5.1 7.8V10.6M2 13V10.6H8.4V13" fill="none" stroke="#2d2d36" stroke-width="1.1"/><rect x="0.4" y="12.4" width="3.2" height="2.8" fill="#2d2d36"/><rect x="6.8" y="12.4" width="3.2" height="2.8" fill="#2d2d36"/></svg>
<svg style="left:973px;top:79px;" width="16" height="16" viewBox="0 0 16 16"><rect x="4.6" y="1.4" width="10" height="12.4" fill="#fff" stroke="#2d2d36" stroke-width="1.1"/><path d="M6.4 4H9M10.4 4H13M6.4 6.4H9M10.4 6.4H13M6.4 8.8H9M10.4 8.8H13M6.4 11.2H9M10.4 11.2H13" stroke="#2d2d36" stroke-width="1.2"/><path d="M1.2 7.4V10.2Q1.2 11.4 2.4 11.6V15.2H4.2V11.6Q5.4 11.4 5.4 10.2V7.4H4.2V9.6H2.4V7.4Z" fill="#2d2d36" stroke="#eeeef2" stroke-width="0.4"/></svg>
<svg style="left:995px;top:79px;" width="16" height="16" viewBox="0 0 16 16"><path d="M8.6 1.2C3.6 1.2 0.8 4.6 0.8 8.2C0.8 12 3.8 14.8 8 14.8C11.6 14.8 14.6 13.4 14.8 11.4C15 9.6 12 10.4 11.2 8.8C10.4 7.2 14.4 6.6 14.2 4.4C14 2.4 11.4 1.2 8.6 1.2Z" fill="#3c3c42"/><circle cx="6.6" cy="4" r="1" fill="#d8d8dc"/><circle cx="3.8" cy="6.2" r="1" fill="#d8d8dc"/><circle cx="3.4" cy="9.6" r="1" fill="#d8d8dc"/><circle cx="5.6" cy="12.2" r="1" fill="#d8d8dc"/><circle cx="10" cy="3.6" r="0.9" fill="#d8d8dc"/></svg>
<svg style="left:1017px;top:79px;" width="16" height="16" viewBox="0 0 16 16"><path d="M5.6 1.2H15V9" fill="none" stroke="#2d2d36" stroke-width="1.6"/><path d="M3.6 3.6H12.8V6" fill="none" stroke="#2d2d36" stroke-width="1.4"/><rect x="0.8" y="6.6" width="9" height="8.4" fill="#2d2d36"/><path d="M0.8 9.6H9.8M0.8 12.2H9.8M3.8 8.4V15M6.8 8.4V15" stroke="#eeeef2" stroke-width="0.8"/><circle cx="10.8" cy="9.6" r="2.5" fill="#eeeef2" stroke="#55555c" stroke-width="1.1"/><path d="M12.6 11.6L15.2 14.6" stroke="#55555c" stroke-width="1.5"/></svg>
<svg style="left:1045px;top:79px;" width="16" height="16" viewBox="0 0 16 16"><path d="M5.6 6.6V1.4H11.6L14.6 4.4V12.4H9.6" fill="none" stroke="#2d2d36" stroke-width="1.1"/><path d="M11.4 1.4V4.6H14.6" fill="none" stroke="#2d2d36" stroke-width="1"/><rect x="0.8" y="9" width="7.4" height="5.8" fill="#2d2d36"/><path d="M2.4 11.9L3.8 10.5V13.3ZM6.6 11.9L5.2 10.5V13.3Z" fill="#fff"/></svg>
<svg style="left:1091px;top:79px;" width="16" height="16" viewBox="0 0 16 16"><path d="M4.6 2.2H14.4V11.4H9" fill="#fff" stroke="#2d2d36" stroke-width="1.1"/><rect x="4" y="1" width="11" height="2.6" fill="#2d2d36"/><circle cx="5" cy="10.4" r="4.6" fill="#e21b0c"/></svg>
<svg style="left:1113px;top:79px;" width="16" height="16" viewBox="0 0 16 16"><path d="M5 3V1.4H14.6V10.4H13" fill="none" stroke="#2d2d36" stroke-width="1"/><path d="M3 5V3.2H12.8V12" fill="none" stroke="#2d2d36" stroke-width="1"/><rect x="0.8" y="5.2" width="10.4" height="8.6" fill="#fff" stroke="#2d2d36" stroke-width="1.2"/><path d="M1 5.6L6 10L11 5.6" fill="none" stroke="#2d2d36" stroke-width="1.1"/><circle cx="9.4" cy="13.4" r="1.5" fill="#eeeef2" stroke="#55555c" stroke-width="0.9"/><circle cx="13.2" cy="13.4" r="1.5" fill="#eeeef2" stroke="#55555c" stroke-width="0.9"/><path d="M9.6 11.8L10.6 9.6H12L13 11.8" fill="none" stroke="#55555c" stroke-width="0.8"/></svg>
<svg style="left:1141px;top:79px;" width="16" height="16" viewBox="0 0 16 16"><path d="M3.6 1.4H1.4V7.6H3.6M12.4 1.4H14.6V7.6H12.4" fill="none" stroke="#9a9aa0" stroke-width="1"/><path d="M8 1.6L11.4 3.2V6L8 7.8L4.6 6V3.2Z" fill="#9a9aa0"/><path d="M4.6 3.2L8 4.8L11.4 3.2" stroke="#eeeef2" stroke-width="0.6" fill="none"/><path d="M8 7.8V10" stroke="#9a9aa0" stroke-width="1"/><circle cx="5.9" cy="13.4" r="1.5" fill="none" stroke="#9a9aa0" stroke-width="0.9"/><circle cx="10.1" cy="13.4" r="1.5" fill="none" stroke="#9a9aa0" stroke-width="0.9"/><path d="M6 11.8L7.1 9.8H8.9L10 11.8" fill="none" stroke="#9a9aa0" stroke-width="0.8"/></svg>
<svg style="left:1163px;top:79px;" width="16" height="16" viewBox="0 0 16 16"><path d="M3.6 1.4H1.4V7.6H3.6M12.4 1.4H14.6V7.6H12.4" fill="none" stroke="#9a9aa0" stroke-width="1"/><circle cx="8" cy="4.6" r="3.6" fill="none" stroke="#9a9aa0" stroke-width="1"/><path d="M4.4 4.6H11.6M8 1V8.2M6 1.8Q4.8 4.6 6 7.4M10 1.8Q11.2 4.6 10 7.4" fill="none" stroke="#9a9aa0" stroke-width="0.7"/><path d="M8 8.2V10" stroke="#9a9aa0" stroke-width="1"/><circle cx="5.9" cy="13.4" r="1.5" fill="none" stroke="#9a9aa0" stroke-width="0.9"/><circle cx="10.1" cy="13.4" r="1.5" fill="none" stroke="#9a9aa0" stroke-width="0.9"/><path d="M6 11.8L7.1 9.8H8.9L10 11.8" fill="none" stroke="#9a9aa0" stroke-width="0.8"/></svg>
<svg style="left:1185px;top:79px;" width="16" height="16" viewBox="0 0 16 16"><circle cx="4" cy="10.4" r="2.6" fill="none" stroke="#9a9aa0" stroke-width="1.3"/><circle cx="12" cy="10.4" r="2.6" fill="none" stroke="#9a9aa0" stroke-width="1.3"/><path d="M2 8.6L5.4 3.2H10.6L14 8.6M6.6 10H9.4" fill="none" stroke="#9a9aa0" stroke-width="1.2"/></svg>
<svg style="left:1207px;top:79px;" width="16" height="16" viewBox="0 0 16 16"><rect x="1.6" y="1.2" width="13" height="11" fill="none" stroke="#9a9aa0" stroke-width="1"/><rect x="1.6" y="1.2" width="13" height="2.6" fill="#9a9aa0"/><path d="M1.6 6.6H14.6M1.6 9.4H14.6M6 3.8V12.2M10.4 3.8V12.2" stroke="#9a9aa0" stroke-width="0.9"/><rect x="0" y="9.6" width="7.4" height="6" fill="#eeeef2"/><circle cx="1.6999999999999997" cy="13.6" r="1.5" fill="none" stroke="#9a9aa0" stroke-width="0.9"/><circle cx="5.9" cy="13.6" r="1.5" fill="none" stroke="#9a9aa0" stroke-width="0.9"/><path d="M1.7999999999999998 12.0L2.9 10.0H4.7L5.8 12.0" fill="none" stroke="#9a9aa0" stroke-width="0.8"/></svg>
<svg style="left:1235px;top:79px;" width="16" height="16" viewBox="0 0 16 16"><path d="M4.2 3H14.6M4.2 8H14.6M4.2 13H14.6" stroke="#6c6c72" stroke-width="2.7"/><path d="M3.6 5.6H1.6V13H3.6" fill="none" stroke="#6c6c72" stroke-width="1.1"/><rect x="1" y="1.9" width="2.4" height="2.2" fill="#6c6c72"/></svg>
<svg style="left:1281px;top:79px;" width="16" height="16" viewBox="0 0 16 16"><rect x="2" y="1" width="13.4" height="2.6" fill="#2d2d36"/><path d="M9.6 5H15M9.6 8H15M9.6 11H15M12.2 3.6V12.6" stroke="#2d2d36" stroke-width="1.6" fill="none"/><rect x="9.4" y="3.6" width="5.8" height="9" fill="none" stroke="#2d2d36" stroke-width="1"/><path d="M1 5.6000000000000005Q1 4.4 5.0 4.4Q9 4.4 9 5.6000000000000005V13.8Q9 15.0 5.0 15.0Q1 15.0 1 13.8Z" fill="#34343a"/><ellipse cx="5.0" cy="5.9" rx="3.0" ry="0.9" fill="#c8c8cc"/></svg>
<svg style="left:1303px;top:79px;" width="16" height="16" viewBox="0 0 16 16"><rect x="5.2" y="1.0" width="2.8" height="2.8" fill="#2d2d36"/><rect x="5.2" y="4.8" width="2.8" height="2.8" fill="#2d2d36"/><rect x="5.2" y="8.6" width="2.8" height="2.8" fill="#2d2d36"/><rect x="9.0" y="1.0" width="2.8" height="2.8" fill="#2d2d36"/><rect x="9.0" y="4.8" width="2.8" height="2.8" fill="#2d2d36"/><rect x="9.0" y="8.6" width="2.8" height="2.8" fill="#2d2d36"/><rect x="12.8" y="1.0" width="2.8" height="2.8" fill="#2d2d36"/><rect x="12.8" y="4.8" width="2.8" height="2.8" fill="#2d2d36"/><rect x="12.8" y="8.6" width="2.8" height="2.8" fill="#2d2d36"/><rect x="0.6" y="3.6" width="9" height="12" fill="#eeeef2"/><path d="M1 5.6000000000000005Q1 4.4 5.0 4.4Q9 4.4 9 5.6000000000000005V13.8Q9 15.0 5.0 15.0Q1 15.0 1 13.8Z" fill="#34343a"/><ellipse cx="5.0" cy="5.9" rx="3.0" ry="0.9" fill="#c8c8cc"/></svg>
<svg style="left:1325px;top:79px;" width="16" height="16" viewBox="0 0 16 16"><circle cx="10.2" cy="5.8" r="4.8" fill="none" stroke="#55555c" stroke-width="1"/><path d="M5.4 5.8H15M10.2 1V10.6M8 1.6Q6.4 5.8 8 10M12.4 1.6Q14 5.8 12.4 10" fill="none" stroke="#55555c" stroke-width="0.8"/><circle cx="4.6" cy="7" r="2.6" fill="#2d2d36" stroke="#eeeef2" stroke-width="0.8"/><path d="M0.8 15V10.4H3.4L4.6 12L5.8 10.4H8.4V15Z" fill="#2d2d36"/></svg>
<div style="left:0px;top:101px;width:310px;height:20px;background:#bccadb;"></div>
<div style="left:0px;top:101px;width:310px;height:1px;background:#9fa9b6;"></div>
<div style="left:0px;top:101px;width:1px;height:20px;background:#a9b6c6;"></div>
<div style="left:309px;top:101px;width:1px;height:20px;background:#8d97a6;"></div>
<span style="left:4.4px;top:104.30px;font-size:12px;line-height:16px;color:#101010;letter-spacing:-0.214px;">Class Palette [WebApp]</span>
<svg style="left:280px;top:106px;" width="8" height="10" viewBox="0 0 8 10"><path d="M2.5 1.2H5.5" stroke="#5a6068" stroke-width="0.8"/><path d="M2.5 1V6.5M5.6 1V6.5" stroke="#000" stroke-width="1.15" fill="none"/><path d="M0.8 6.6H7.2" stroke="#000" stroke-width="1.2"/><path d="M4 7.2V9.6" stroke="#4a4e58" stroke-width="1"/></svg>
<svg style="left:297px;top:106.2px;" width="8" height="8" viewBox="0 0 8 8"><path d="M1 1L7 7.3M7 1L1 7.3" stroke="#22222a" stroke-width="1.25"/></svg>
<div style="left:0px;top:121px;width:294px;height:651px;background:#f5f5f6;"></div>
<div style="left:294px;top:121px;width:16px;height:651px;background:#f0f0f0;"></div>
<div style="left:294.2px;top:138px;width:14.8px;height:411px;background:#cdcdcd;"></div>
<svg style="left:297px;top:127px;" width="9" height="7" viewBox="0 0 9 7"><path d="M0.8 6L4.5 2L8.2 6" stroke="#5a5a5a" stroke-width="2.2" fill="none"/></svg>
<svg style="left:297px;top:759px;" width="9" height="7" viewBox="0 0 9 7"><path d="M0.8 1L4.5 5L8.2 1" stroke="#5a5a5a" stroke-width="2.2" fill="none"/></svg>
<svg style="left:9px;top:129px;" width="9" height="9" viewBox="0 0 9 9"><path d="M8 1V8H1Z" fill="#1e1e1e"/></svg>
<span style="left:25.2px;top:124.80px;font-size:12px;line-height:16px;color:#1e1e1e;letter-spacing:-0.061px;">Web Controls</span>
<div style="left:2px;top:227.5px;width:289px;height:19.5px;background:#cccedb;"></div>
<span style="left:47.6px;top:149.00px;font-size:12px;line-height:16px;color:#1e1e1e;letter-spacing:0.095px;">cWebButton</span>
<span style="left:47.6px;top:169.00px;font-size:12px;line-height:16px;color:#1e1e1e;letter-spacing:-0.110px;">cWebCheckbox</span>
<span style="left:47.6px;top:189.00px;font-size:12px;line-height:16px;color:#1e1e1e;letter-spacing:-0.002px;">cWebColorForm</span>
<span style="left:47.6px;top:209.00px;font-size:12px;line-height:16px;color:#1e1e1e;letter-spacing:-0.069px;">cWebColorPicker</span>
<span style="left:47.6px;top:229.00px;font-size:12px;line-height:16px;color:#1e1e1e;letter-spacing:0.122px;">cWebColumn</span>
<span style="left:47.6px;top:249.00px;font-size:12px;line-height:16px;color:#1e1e1e;letter-spacing:0.174px;">cWebColumnButton</span>
<span style="left:47.6px;top:269.00px;font-size:12px;line-height:16px;color:#1e1e1e;letter-spacing:0.038px;">cWebColumnCheckbox</span>
<span style="left:47.6px;top:289.00px;font-size:12px;line-height:16px;color:#1e1e1e;letter-spacing:0.194px;">cWebColumnCombo</span>
<span style="left:47.6px;top:309.00px;font-size:12px;line-height:16px;color:#1e1e1e;letter-spacing:0.027px;">cWebColumnDate</span>
<span style="left:47.6px;top:329.00px;font-size:12px;line-height:16px;color:#1e1e1e;letter-spacing:0.103px;">cWebColumnImage</span>
<span style="left:47.6px;top:349.00px;font-size:12px;line-height:16px;color:#1e1e1e;letter-spacing:0.137px;">cWebColumnLink</span>
<span style="left:47.6px;top:369.00px;font-size:12px;line-height:16px;color:#1e1e1e;letter-spacing:0.013px;">cWebColumnSuggestion</span>
<span style="left:47.6px;top:389.00px;font-size:12px;line-height:16px;color:#1e1e1e;letter-spacing:0.120px;">cWebCombo</span>
<span style="left:47.6px;top:409.00px;font-size:12px;line-height:16px;color:#1e1e1e;letter-spacing:0.017px;">cWebCommandBar</span>
<span style="left:47.6px;top:429.00px;font-size:12px;line-height:16px;color:#1e1e1e;letter-spacing:-0.163px;">cWebDateForm</span>
<span style="left:47.6px;top:449.00px;font-size:12px;line-height:16px;color:#1e1e1e;letter-spacing:-0.180px;">cWebDatePicker</span>
<span style="left:47.6px;top:469.00px;font-size:12px;line-height:16px;color:#1e1e1e;letter-spacing:-0.076px;">cWebEdit</span>
<span style="left:47.6px;top:489.00px;font-size:12px;line-height:16px;color:#1e1e1e;letter-spacing:-0.095px;">cWebFileUploadForm</span>
<span style="left:47.6px;top:509.00px;font-size:12px;line-height:16px;color:#1e1e1e;letter-spacing:-0.027px;">cWebFileUploadButton</span>
<span style="left:47.6px;top:529.00px;font-size:12px;line-height:16px;color:#1e1e1e;letter-spacing:-0.050px;">cWebForm</span>
<span style="left:47.6px;top:549.00px;font-size:12px;line-height:16px;color:#1e1e1e;letter-spacing:-0.146px;">cWebGrid</span>
<span style="left:47.6px;top:569.00px;font-size:12px;line-height:16px;color:#1e1e1e;letter-spacing:0.090px;">cWebHtmlBox</span>
<span style="left:47.6px;top:589.00px;font-size:12px;line-height:16px;color:#1e1e1e;letter-spacing:0.026px;">cWebHorizontalLine</span>
<span style="left:47.6px;top:609.00px;font-size:12px;line-height:16px;color:#1e1e1e;letter-spacing:-0.206px;">cWebIFrame</span>
<span style="left:47.6px;top:629.00px;font-size:12px;line-height:16px;color:#1e1e1e;letter-spacing:-0.038px;">cWebImage</span>
<span style="left:47.6px;top:649.00px;font-size:12px;line-height:16px;color:#1e1e1e;letter-spacing:-0.177px;">cWebLabel</span>
<span style="left:47.6px;top:669.00px;font-size:12px;line-height:16px;color:#1e1e1e;letter-spacing:-0.118px;">cWebList</span>
<span style="left:47.6px;top:689.00px;font-size:12px;line-height:16px;color:#1e1e1e;letter-spacing:-0.078px;">cWebListSwipeButton</span>
<span style="left:47.6px;top:709.00px;font-size:12px;line-height:16px;color:#1e1e1e;letter-spacing:-0.054px;">cWebMenuBar</span>
<span style="left:47.6px;top:729.00px;font-size:12px;line-height:16px;color:#1e1e1e;letter-spacing:0.157px;">cWebMenuButton</span>
<span style="left:47.6px;top:749.00px;font-size:12px;line-height:16px;color:#1e1e1e;letter-spacing:0.099px;">cWebMenuItem</span>
<svg style="left:25px;top:149px;" width="16" height="16" viewBox="0 0 16 16"><rect x="1.5" y="3.6" width="13" height="9" rx="2.6" fill="#ececee" stroke="#3c3c3c" stroke-width="1"/></svg>
<svg style="left:25px;top:169px;" width="16" height="16" viewBox="0 0 16 16"><rect x="1.4" y="1.4" width="13.2" height="13.2" fill="#fafafa" stroke="#bdbdc0" stroke-width="1"/><path d="M4.4 8.4L6.8 11.4L11.6 4.2" fill="none" stroke="#c2c2c6" stroke-width="1.4"/></svg>
<svg style="left:25px;top:189px;" width="16" height="16" viewBox="0 0 16 16"><g transform="translate(0,-1) scale(0.88)"><path d="M8.2 6.2L2.6 11.8L1.4 14.6L4.2 13.4L9.8 7.8" fill="#f5f5f6" stroke="#3c3c3c" stroke-width="1"/><path d="M7.2 4.4L11.6 8.8L12.6 7.8L11.4 6.6L13.8 4.2Q15 2.4 13.6 1.2Q12.2 0.4 11 1.6L9.4 3.8L8.2 3.4Z" fill="#3c3c3c"/></g><rect x="9.2" y="13" width="1.6" height="1.6" fill="#3c3c3c"/><rect x="12.4" y="13" width="1.6" height="1.6" fill="#3c3c3c"/></svg>
<svg style="left:25px;top:209px;" width="16" height="16" viewBox="0 0 16 16"><path d="M8.2 6.2L2.6 11.8L1.4 14.6L4.2 13.4L9.8 7.8" fill="#f5f5f6" stroke="#3c3c3c" stroke-width="1"/><path d="M7.2 4.4L11.6 8.8L12.6 7.8L11.4 6.6L13.8 4.2Q15 2.4 13.6 1.2Q12.2 0.4 11 1.6L9.4 3.8L8.2 3.4Z" fill="#3c3c3c"/></svg>
<svg style="left:25px;top:229px;" width="16" height="16" viewBox="0 0 16 16"><path d="M1.4 0.8V3.2H3.8V0.8M12.2 0.8V3.2H14.6V0.8" fill="none" stroke="#3c3c3c" stroke-width="1"/><path d="M8 0.6L11.6 4.6H4.4Z" fill="#3c3c3c"/><rect x="7.1" y="4.2" width="1.8" height="3.4" fill="#3c3c3c"/><rect x="6.4" y="9.6" width="3.2" height="5.4" fill="#4a6aa8" stroke="#2d3f6e" stroke-width="0.9"/></svg>
<svg style="left:25px;top:249px;" width="16" height="16" viewBox="0 0 16 16"><path d="M1.4 0.8V3.2H3.8V0.8M12.2 0.8V3.2H14.6V0.8" fill="none" stroke="#3c3c3c" stroke-width="1"/><path d="M8 0.6L11.6 4.6H4.4Z" fill="#3c3c3c"/><rect x="7.1" y="4.2" width="1.8" height="3.4" fill="#3c3c3c"/><rect x="2" y="9.8" width="12" height="5" rx="2.5" fill="#f5f5f6" stroke="#3c3c3c" stroke-width="1"/></svg>
<svg style="left:25px;top:269px;" width="16" height="16" viewBox="0 0 16 16"><path d="M1.4 0.8V3.2H3.8V0.8M12.2 0.8V3.2H14.6V0.8" fill="none" stroke="#3c3c3c" stroke-width="1"/><path d="M8 0.6L11.6 4.6H4.4Z" fill="#3c3c3c"/><rect x="7.1" y="4.2" width="1.8" height="3.4" fill="#3c3c3c"/><rect x="4" y="8.4" width="8" height="7" fill="#f2f8f2" stroke="#3c3c3c" stroke-width="1"/><path d="M5.6 11.8L7.4 13.8L10.6 9.6" fill="none" stroke="#2f8a2f" stroke-width="1.4"/></svg>
<svg style="left:25px;top:289px;" width="16" height="16" viewBox="0 0 16 16"><path d="M1.4 0.8V3.2H3.8V0.8M12.2 0.8V3.2H14.6V0.8" fill="none" stroke="#3c3c3c" stroke-width="1"/><path d="M8 0.6L11.6 4.6H4.4Z" fill="#3c3c3c"/><rect x="7.1" y="4.2" width="1.8" height="3.4" fill="#3c3c3c"/><rect x="1.2" y="9.6" width="13.6" height="5.2" fill="#f5f5f6" stroke="#3c3c3c" stroke-width="1"/><path d="M9.4 9.6V14.8" stroke="#3c3c3c" stroke-width="1"/><path d="M10.6 11.2H13.6L12.1 13.2Z" fill="#3c3c3c"/></svg>
<svg style="left:25px;top:309px;" width="16" height="16" viewBox="0 0 16 16"><path d="M1.4 0.8V3.2H3.8V0.8M12.2 0.8V3.2H14.6V0.8" fill="none" stroke="#3c3c3c" stroke-width="1"/><path d="M8 0.6L11.6 4.6H4.4Z" fill="#3c3c3c"/><rect x="7.1" y="4.2" width="1.8" height="3.4" fill="#3c3c3c"/><rect x="1.2" y="8.2" width="13.6" height="7.200000000000001" fill="#3c3c3c"/><rect x="2.6" y="10.4" width="1.9" height="1.5" fill="#fff"/><rect x="2.6" y="13.0" width="1.9" height="1.5" fill="#fff"/><rect x="5.7" y="10.4" width="1.9" height="1.5" fill="#fff"/><rect x="5.7" y="13.0" width="1.9" height="1.5" fill="#fff"/><rect x="8.8" y="10.4" width="1.9" height="1.5" fill="#fff"/><rect x="8.8" y="13.0" width="1.9" height="1.5" fill="#fff"/><rect x="11.9" y="10.4" width="1.9" height="1.5" fill="#fff"/><rect x="11.9" y="13.0" width="1.9" height="1.5" fill="#fff"/><rect x="8.8" y="13" width="1.9" height="1.5" fill="#c8281e"/></svg>
<svg style="left:25px;top:329px;" width="16" height="16" viewBox="0 0 16 16"><path d="M1.4 0.8V3.2H3.8V0.8M12.2 0.8V3.2H14.6V0.8" fill="none" stroke="#3c3c3c" stroke-width="1"/><path d="M8 0.6L11.6 4.6H4.4Z" fill="#3c3c3c"/><rect x="7.1" y="4.2" width="1.8" height="3.4" fill="#3c3c3c"/><rect x="3" y="8.6" width="10" height="6.8" fill="#fafafa" stroke="#3c3c3c" stroke-width="1"/><path d="M4 13.4L6.4 11L8 12.6L9.6 11.4L12 13.4" fill="none" stroke="#3c3c3c" stroke-width="0.9"/></svg>
<svg style="left:25px;top:349px;" width="16" height="16" viewBox="0 0 16 16"><path d="M1.4 0.8V3.2H3.8V0.8M12.2 0.8V3.2H14.6V0.8" fill="none" stroke="#3c3c3c" stroke-width="1"/><path d="M8 0.6L11.6 4.6H4.4Z" fill="#3c3c3c"/><rect x="7.1" y="4.2" width="1.8" height="3.4" fill="#3c3c3c"/><path d="M6 9H10M8 9V13" stroke="#4a6aa8" stroke-width="1"/><path d="M4 14.8H12" stroke="#4a6aa8" stroke-width="1"/></svg>
<svg style="left:25px;top:369px;" width="16" height="16" viewBox="0 0 16 16"><path d="M1.4 0.8V3.2H3.8V0.8M12.2 0.8V3.2H14.6V0.8" fill="none" stroke="#3c3c3c" stroke-width="1"/><path d="M8 0.6L11.6 4.6H4.4Z" fill="#3c3c3c"/><rect x="7.1" y="4.2" width="1.8" height="3.4" fill="#3c3c3c"/><rect x="4.2" y="9.4" width="7.6" height="5.6" fill="#f5f5f6" stroke="#3c3c3c" stroke-width="1"/><path d="M4.2 12.2H11.8" stroke="#3c3c3c" stroke-width="1.05"/></svg>
<svg style="left:25px;top:389px;" width="16" height="16" viewBox="0 0 16 16"><rect x="1.2" y="1.4" width="13.6" height="4" fill="#fafafa" stroke="#3c3c3c" stroke-width="1"/><rect x="11.4" y="2.8" width="1.6" height="1.4" fill="#3c3c3c"/><rect x="1.2" y="5.4" width="9.4" height="9.4" fill="#fafafa" stroke="#3c3c3c" stroke-width="1"/><rect x="1.8" y="6" width="8.2" height="2.2" fill="#77777c"/><path d="M1.2 11.6H10.6" stroke="#3c3c3c" stroke-width="1"/></svg>
<svg style="left:25px;top:409px;" width="16" height="16" viewBox="0 0 16 16"><path d="M1.4 15.6V1.6H14.6V15.6" fill="none" stroke="#3c3c3c" stroke-width="1.05"/><path d="M4 15.6V4.2H12V15.6" fill="none" stroke="#3c3c3c" stroke-width="1.05"/><path d="M6.6 1.6V4.2" stroke="#3c3c3c" stroke-width="1"/><path d="M2 2.9H14" stroke="#77777c" stroke-width="1"/></svg>
<svg style="left:25px;top:429px;" width="16" height="16" viewBox="0 0 16 16"><rect x="1.2" y="1.2" width="13.6" height="14" fill="#3c3c3c"/><rect x="2.6" y="5.0" width="1.9" height="1.5" fill="#fff"/><rect x="2.6" y="7.6" width="1.9" height="1.5" fill="#fff"/><rect x="2.6" y="10.2" width="1.9" height="1.5" fill="#fff"/><rect x="2.6" y="12.8" width="1.9" height="1.5" fill="#fff"/><rect x="5.7" y="5.0" width="1.9" height="1.5" fill="#fff"/><rect x="5.7" y="7.6" width="1.9" height="1.5" fill="#fff"/><rect x="5.7" y="10.2" width="1.9" height="1.5" fill="#fff"/><rect x="5.7" y="12.8" width="1.9" height="1.5" fill="#fff"/><rect x="8.8" y="5.0" width="1.9" height="1.5" fill="#fff"/><rect x="8.8" y="7.6" width="1.9" height="1.5" fill="#fff"/><rect x="8.8" y="10.2" width="1.9" height="1.5" fill="#fff"/><rect x="8.8" y="12.8" width="1.9" height="1.5" fill="#fff"/><rect x="11.9" y="5.0" width="1.9" height="1.5" fill="#fff"/><rect x="11.9" y="7.6" width="1.9" height="1.5" fill="#fff"/><rect x="11.9" y="10.2" width="1.9" height="1.5" fill="#fff"/><rect x="11.9" y="12.8" width="1.9" height="1.5" fill="#fff"/><rect x="2.4" y="2.4" width="6.6" height="1.5" fill="#fff"/><rect x="11.6" y="2.4" width="1.9" height="1.4" fill="#fff"/><rect x="8.8" y="10.2" width="1.9" height="1.5" fill="#c8281e"/><rect x="5.7" y="10.2" width="1.9" height="1.5" fill="#c8281e"/></svg>
<svg style="left:25px;top:449px;" width="16" height="16" viewBox="0 0 16 16"><rect x="1" y="1.6" width="14" height="3.6" fill="#fafafa" stroke="#3c3c3c" stroke-width="1"/><path d="M10.6 2.8H13.4L12 4.4Z" fill="#3c3c3c"/><rect x="4.4" y="5.2" width="10" height="9.8" fill="#fafafa" stroke="#3c3c3c" stroke-width="1.05"/><rect x="6.0" y="7.2" width="1.4" height="1.3" fill="#77777c"/><rect x="6.0" y="9.6" width="1.4" height="1.3" fill="#77777c"/><rect x="6.0" y="12.0" width="1.4" height="1.3" fill="#77777c"/><rect x="8.4" y="7.2" width="1.4" height="1.3" fill="#77777c"/><rect x="8.4" y="9.6" width="1.4" height="1.3" fill="#77777c"/><rect x="8.4" y="12.0" width="1.4" height="1.3" fill="#77777c"/><rect x="10.8" y="7.2" width="1.4" height="1.3" fill="#77777c"/><rect x="10.8" y="9.6" width="1.4" height="1.3" fill="#77777c"/><rect x="10.8" y="12.0" width="1.4" height="1.3" fill="#77777c"/><rect x="10.6" y="11.6" width="2.2" height="2" fill="#3c3c3c"/></svg>
<svg style="left:25px;top:469px;" width="16" height="16" viewBox="0 0 16 16"><rect x="1.2" y="1.8" width="13.6" height="12.4" fill="#fafafa" stroke="#3c3c3c" stroke-width="1"/><path d="M4.2 3H5.2Q6 3 6 3.8Q6 3 6.8 3H7.8M4.2 10.4H5.2Q6 10.4 6 9.6Q6 10.4 6.8 10.4H7.8M6 3.8V9.6" fill="none" stroke="#3c3c3c" stroke-width="0.9"/></svg>
<svg style="left:25px;top:489px;" width="16" height="16" viewBox="0 0 16 16"><path d="M2.4 2.4H6.4L7.4 1.2H14.8V9.4H2.4Z" fill="#dcb67a"/><path d="M2.4 3.4H14.8" stroke="#e8cf9f" stroke-width="0.8"/><rect x="1.2" y="9.4" width="10.8" height="4.8" fill="#fafafa" stroke="#3c3c3c" stroke-width="1.05"/></svg>
<svg style="left:25px;top:509px;" width="16" height="16" viewBox="0 0 16 16"><path d="M2.4 2.4H6.4L7.4 1.2H14.8V9.4H2.4Z" fill="#dcb67a"/><path d="M2.4 3.4H14.8" stroke="#e8cf9f" stroke-width="0.8"/><rect x="1.2" y="9.4" width="10.8" height="5" rx="2.5" fill="#fafafa" stroke="#3c3c3c" stroke-width="1.05"/></svg>
<svg style="left:25px;top:529px;" width="16" height="16" viewBox="0 0 16 16"><rect x="4.4" y="5.6" width="10.4" height="5" fill="#fafafa" stroke="#3c3c3c" stroke-width="1"/><path d="M1.4 4.4H2.6Q3.6 4.4 3.6 5.4Q3.6 4.4 4.6 4.4H5.8M1.4 11.8H2.6Q3.6 11.8 3.6 10.8Q3.6 11.8 4.6 11.8H5.8M3.6 5.4V10.8" fill="none" stroke="#3c3c3c" stroke-width="0.9" stroke-dasharray="1.4 0.7"/><rect x="1" y="6.6" width="2" height="3" fill="none" stroke="#3c3c3c" stroke-width="0.8"/></svg>
<svg style="left:25px;top:549px;" width="16" height="16" viewBox="0 0 16 16"><rect x="1.2" y="1.4" width="13.6" height="13.4" fill="#fafafa" stroke="#3c3c3c" stroke-width="1.05"/><path d="M1.2 4.4H14.8M4.6 1.4V14.8" stroke="#3c3c3c" stroke-width="1"/><rect x="6.0" y="6.0" width="1.9" height="1.9" fill="#55555a"/><rect x="6.0" y="9.0" width="1.9" height="1.9" fill="#55555a"/><rect x="6.0" y="12.0" width="1.9" height="1.9" fill="#55555a"/><rect x="9.0" y="6.0" width="1.9" height="1.9" fill="#55555a"/><rect x="9.0" y="9.0" width="1.9" height="1.9" fill="#55555a"/><rect x="9.0" y="12.0" width="1.9" height="1.9" fill="#55555a"/><rect x="12.0" y="6.0" width="1.9" height="1.9" fill="#55555a"/><rect x="12.0" y="9.0" width="1.9" height="1.9" fill="#55555a"/><rect x="12.0" y="12.0" width="1.9" height="1.9" fill="#55555a"/></svg>
<svg style="left:25px;top:569px;" width="16" height="16" viewBox="0 0 16 16"><rect x="1.2" y="1.8" width="13.6" height="12.4" fill="#fafafa" stroke="#3c3c3c" stroke-width="1.05"/><path d="M6.4 5.2L3.6 7.8L6.4 10.4M9.6 5.2L12.4 7.8L9.6 10.4" fill="none" stroke="#6a6a70" stroke-width="1"/></svg>
<svg style="left:25px;top:589px;" width="16" height="16" viewBox="0 0 16 16"><path d="M1 8.5H15" stroke="#3c3c3c" stroke-width="1"/></svg>
<svg style="left:25px;top:609px;" width="16" height="16" viewBox="0 0 16 16"><rect x="1.2" y="1.6" width="13.6" height="12.8" fill="#fafafa" stroke="#3c3c3c" stroke-width="1.05"/><path d="M1.2 3.8H14.8M1.2 12.2H14.8" stroke="#3c3c3c" stroke-width="1"/><path d="M6.6 6L4.4 8L6.6 10M9.4 6L11.6 8L9.4 10" fill="none" stroke="#77777c" stroke-width="1"/></svg>
<svg style="left:25px;top:629px;" width="16" height="16" viewBox="0 0 16 16"><rect x="1.3" y="1.6" width="13.4" height="12.8" fill="#fafafa" stroke="#3c3c3c" stroke-width="1.2"/><path d="M1.6 11.6L5.4 6.6L8.6 10.2L10.8 8.4L14.4 12" fill="none" stroke="#3c3c3c" stroke-width="1.3"/><path d="M1.6 12.6L5.4 8L8.6 11.4L10.8 9.6L14.4 13V14H1.6Z" fill="#3c3c3c"/><rect x="10.2" y="4" width="1.8" height="1.8" fill="#3c3c3c"/></svg>
<svg style="left:25px;top:649px;" width="16" height="16" viewBox="0 0 16 16"><path d="M1.4 1.6H14V4.6H9.4V14.6H6V4.6H1.4Z" fill="#dff0fa" stroke="#2d6fa0" stroke-width="1"/></svg>
<svg style="left:25px;top:669px;" width="16" height="16" viewBox="0 0 16 16"><rect x="1.2" y="1.4" width="13.6" height="13.2" fill="#fafafa" stroke="#3c3c3c" stroke-width="1.05"/><path d="M1.2 5.8H14.8M1.2 10.2H14.8M10.6 1.4V14.6" stroke="#3c3c3c" stroke-width="1"/><rect x="1.8" y="6.4" width="8.2" height="3.2" fill="#3f5f9f"/><rect x="1.8" y="2.2" width="8.2" height="1.4" fill="#8da0c8"/><rect x="12" y="3" width="1.4" height="1.4" fill="#6a6a70"/><rect x="12" y="7.4" width="1.4" height="1.4" fill="#6a6a70"/><rect x="12" y="11.6" width="1.4" height="1.4" fill="#6a6a70"/></svg>
<svg style="left:25px;top:689px;" width="16" height="16" viewBox="0 0 16 16"><path d="M1.4 0.8V3.2H3.8V0.8M12.2 0.8V3.2H14.6V0.8" fill="none" stroke="#3c3c3c" stroke-width="1"/><path d="M8 0.6L11.6 4.6H4.4Z" fill="#3c3c3c"/><rect x="7.1" y="4.2" width="1.8" height="3.4" fill="#3c3c3c"/><rect x="2" y="9.8" width="12" height="5" rx="2.5" fill="#f5f5f6" stroke="#3c3c3c" stroke-width="1"/></svg>
<svg style="left:25px;top:709px;" width="16" height="16" viewBox="0 0 16 16"><path d="M1.2 1.6H8.4V4.4H1.2ZM4.8 1.6V4.4" fill="#fafafa" stroke="#3c3c3c" stroke-width="1"/><rect x="8.4" y="1.6" width="6.2" height="12.8" fill="#fafafa" stroke="#3c3c3c" stroke-width="1.05"/><rect x="9" y="2.2" width="5" height="2.4" fill="#3f5f9f"/><rect x="9" y="6.8" width="5" height="2.6" fill="#3f5f9f"/><path d="M8.4 5.4H14.6M8.4 10.6H14.6" stroke="#3c3c3c" stroke-width="0.9"/></svg>
<svg style="left:25px;top:729px;" width="16" height="16" viewBox="0 0 16 16"><rect x="1.4" y="1.4" width="9" height="4.2" rx="2.1" fill="#fafafa" stroke="#3c3c3c" stroke-width="1"/><rect x="8.2" y="5" width="6.4" height="9.8" fill="#fafafa" stroke="#3c3c3c" stroke-width="1.05"/><rect x="8.8" y="8.6" width="5.2" height="2.8" fill="#3f5f9f"/><path d="M8.2 7.8H14.6M8.2 12H14.6" stroke="#3c3c3c" stroke-width="0.9"/></svg>
<svg style="left:25px;top:749px;" width="16" height="16" viewBox="0 0 16 16"><rect x="4.2" y="1.4" width="7.6" height="13.4" fill="#fafafa" stroke="#34466e" stroke-width="1.05"/><rect x="5.6" y="3" width="4.8" height="1.8" fill="#fafafa" stroke="#34466e" stroke-width="0.8"/><rect x="4.8" y="6.6" width="6.4" height="3.2" fill="#3f6fc0"/><path d="M6 8.2H10" stroke="#fff" stroke-width="0.8"/><rect x="5.6" y="11.4" width="4.8" height="1.8" fill="#fafafa" stroke="#34466e" stroke-width="0.8"/></svg>
<svg style="left:25px;top:769px;" width="16" height="3" viewBox="0 0 16 3"><path d="M4 1.4H12" stroke="#3c3c3c" stroke-width="1"/></svg>
<div style="left:0px;top:772px;width:310px;height:24px;background:#eeeef2;"></div>
<div style="left:201.5px;top:772px;width:103.5px;height:23px;background:#ffffff;"></div>
<div style="left:2.5px;top:773px;width:99px;height:21px;border:1px solid #dadae0;box-sizing:border-box;border-top:none;"></div>
<div style="left:101.5px;top:773px;width:100px;height:21px;border:1px solid #dadae0;box-sizing:border-box;border-top:none;border-left:none;"></div>
<span style="left:26.8px;top:774.80px;font-size:12px;line-height:16px;color:#1e1e1e;letter-spacing:-0.327px;">Table Explor...</span>
<span style="left:126.6px;top:774.80px;font-size:12px;line-height:16px;color:#1e1e1e;letter-spacing:-0.275px;">Code Explor...</span>
<span style="left:225.5px;top:775.20px;font-size:12px;line-height:16px;color:#1e1e1e;letter-spacing:-0.467px;">Class Palette...</span>
<div style="left:0px;top:800.4px;width:310px;height:20.4px;background:#bccadb;"></div>
<div style="left:0px;top:800.4px;width:310px;height:1px;background:#9fa9b6;"></div>
<div style="left:0px;top:800.4px;width:1px;height:20.4px;background:#a9b6c6;"></div>
<div style="left:309px;top:800.4px;width:1px;height:20.4px;background:#8d97a6;"></div>
<span style="left:4.4px;top:803.70px;font-size:12px;line-height:16px;color:#101010;letter-spacing:-0.094px;">File Navigator</span>
<svg style="left:280px;top:805.4px;" width="8" height="10" viewBox="0 0 8 10"><path d="M2.5 1.2H5.5" stroke="#5a6068" stroke-width="0.8"/><path d="M2.5 1V6.5M5.6 1V6.5" stroke="#000" stroke-width="1.15" fill="none"/><path d="M0.8 6.6H7.2" stroke="#000" stroke-width="1.2"/><path d="M4 7.2V9.6" stroke="#4a4e58" stroke-width="1"/></svg>
<svg style="left:297px;top:805.6px;" width="8" height="8" viewBox="0 0 8 8"><path d="M1 1L7 7.3M7 1L1 7.3" stroke="#22222a" stroke-width="1.25"/></svg>
<div style="left:0px;top:821px;width:310px;height:237px;background:#ffffff;border:1px solid #85858c;box-sizing:border-box;"></div>
<span style="left:26.6px;top:823.20px;font-size:12px;line-height:16px;color:#000;letter-spacing:-0.093px;font-weight:bold;">RowLayoutDemo.wo</span>
<div style="left:318px;top:104px;width:142px;height:19px;background:#007acc;"></div>
<span style="left:324.4px;top:104.60px;font-size:12px;line-height:16px;color:#fff;letter-spacing:-0.068px;">RowLayoutDemo.wo*</span>
<svg style="left:446.5px;top:108px;" width="9" height="9" viewBox="0 0 9 9"><path d="M1 1L8 8M8 1L1 8" stroke="#fff" stroke-width="2"/></svg>
<div style="left:316px;top:122px;width:1309px;height:1.4px;background:#1b75bb;"></div>
<svg style="left:1571px;top:105px;" width="50" height="12" viewBox="0 0 50 12"><path d="M6.5 1.5V9.5L2.5 5.5Z" fill="none" stroke="#b4b4bc" stroke-width="1"/><path d="M16.5 1.5V9.5L20.5 5.5Z" fill="none" stroke="#b4b4bc" stroke-width="1"/><path d="M28 4.5H35L31.5 8Z" fill="#6a6a6a"/><path d="M41.5 1L50 9.5M50 1L41.5 9.5" stroke="#555" stroke-width="1.4"/></svg>
<div style="left:316px;top:123.4px;width:1293px;height:721.6px;background:#ffffff;"></div>
<div style="left:316px;top:123.4px;width:24px;height:721.6px;background:#dcdcee;"></div>
<div style="left:316px;top:123.4px;width:1353.93px;height:680.75px;overflow:hidden;transform-origin:0 0;transform:scale(0.955,1.06);font-family:'Liberation Mono',monospace;font-size:16.667px;line-height:22px;-webkit-text-stroke:0.2px;"><span style="position:absolute;left:30.99px;top:1.31px;color:#151515;letter-spacing:0.471px">53</span><span style="position:absolute;left:187.96px;top:1.31px;color:#2222bc;letter-spacing:0.471px">Entry_Item</span><span style="position:absolute;left:303.14px;top:1.31px;color:#101010;letter-spacing:0.471px">Customer</span><span style="position:absolute;left:386.91px;top:1.31px;color:#a03030;letter-spacing:0.471px">.</span><span style="position:absolute;left:397.38px;top:1.31px;color:#2222bc;letter-spacing:0.471px">Address</span><span style="position:absolute;left:30.99px;top:22.06px;color:#151515;letter-spacing:0.471px">54</span><span style="position:absolute;left:187.96px;top:22.06px;color:#2222bc;letter-spacing:0.471px">Set</span><span style="position:absolute;left:229.84px;top:22.06px;color:#101010;letter-spacing:0.471px">psCaption</span><span style="position:absolute;left:334.55px;top:22.06px;color:#2222bc;letter-spacing:0.471px">to</span><span style="position:absolute;left:365.97px;top:22.06px;color:#101010;letter-spacing:0.471px">&quot;</span><span style="position:absolute;left:376.44px;top:22.06px;color:#862286;letter-spacing:0.471px">Address</span><span style="position:absolute;left:449.74px;top:22.06px;color:#101010;letter-spacing:0.471px">&quot;</span><span style="position:absolute;left:30.99px;top:42.81px;color:#151515;letter-spacing:0.471px">55</span><span style="position:absolute;left:187.96px;top:42.81px;color:#2222bc;letter-spacing:0.471px">Set</span><span style="position:absolute;left:229.84px;top:42.81px;color:#101010;letter-spacing:0.471px">piWidth</span><span style="position:absolute;left:313.61px;top:42.81px;color:#2222bc;letter-spacing:0.471px">to</span><span style="position:absolute;left:345.03px;top:42.81px;color:#101010;letter-spacing:0.471px">200</span><span style="position:absolute;left:30.99px;top:63.57px;color:#151515;letter-spacing:0.471px">56</span><span style="position:absolute;left:187.96px;top:63.57px;color:#2222bc;letter-spacing:0.471px">Set</span><span style="position:absolute;left:229.84px;top:63.57px;color:#101010;letter-spacing:0.471px">pbNewLine</span><span style="position:absolute;left:334.55px;top:63.57px;color:#2222bc;letter-spacing:0.471px">to</span><span style="position:absolute;left:365.97px;top:63.57px;color:#2222bc;letter-spacing:0.471px">True</span><span style="position:absolute;left:30.99px;top:84.32px;color:#151515;letter-spacing:0.471px">57</span><span style="position:absolute;left:187.96px;top:84.32px;color:#2222bc;letter-spacing:0.471px">Set</span><span style="position:absolute;left:229.84px;top:84.32px;color:#101010;letter-spacing:0.471px">psCSSClass</span><span style="position:absolute;left:345.03px;top:84.32px;color:#2222bc;letter-spacing:0.471px">to</span><span style="position:absolute;left:376.44px;top:84.32px;color:#101010;letter-spacing:0.471px">&quot;</span><span style="position:absolute;left:386.91px;top:84.32px;color:#862286;letter-spacing:0.471px">RowDetail</span><span style="position:absolute;left:481.15px;top:84.32px;color:#101010;letter-spacing:0.471px">&quot;</span><span style="position:absolute;left:30.99px;top:105.08px;color:#151515;letter-spacing:0.471px">58</span><span style="position:absolute;left:187.96px;top:105.08px;color:#2222bc;letter-spacing:0.471px">Set</span><span style="position:absolute;left:229.84px;top:105.08px;color:#101010;letter-spacing:0.471px">pbFixedWidth</span><span style="position:absolute;left:365.97px;top:105.08px;color:#2222bc;letter-spacing:0.471px">to</span><span style="position:absolute;left:397.38px;top:105.08px;color:#2222bc;letter-spacing:0.471px">True</span><span style="position:absolute;left:30.99px;top:125.83px;color:#151515;letter-spacing:0.471px">59</span><span style="position:absolute;left:146.07px;top:125.83px;color:#2222bc;letter-spacing:0.471px">End_Object</span><span style="position:absolute;left:30.99px;top:146.59px;color:#151515;letter-spacing:0.471px">60</span><span style="position:absolute;left:30.99px;top:167.34px;color:#151515;letter-spacing:0.471px">61</span><span style="position:absolute;left:146.07px;top:167.34px;color:#2222bc;letter-spacing:0.471px">Object</span><span style="position:absolute;left:219.37px;top:167.34px;color:#101010;letter-spacing:0.471px">oWebColumn3</span><span style="position:absolute;left:345.03px;top:167.34px;color:#2222bc;letter-spacing:0.471px">is</span><span style="position:absolute;left:376.44px;top:167.34px;color:#2222bc;letter-spacing:0.471px">a</span><span style="position:absolute;left:397.38px;top:167.34px;color:#101010;letter-spacing:0.471px">cWebColumn</span><span style="position:absolute;left:30.99px;top:188.10px;color:#151515;letter-spacing:0.471px">62</span><span style="position:absolute;left:187.96px;top:188.10px;color:#2222bc;letter-spacing:0.471px">Entry_Item</span><span style="position:absolute;left:303.14px;top:188.10px;color:#101010;letter-spacing:0.471px">Customer</span><span style="position:absolute;left:386.91px;top:188.10px;color:#a03030;letter-spacing:0.471px">.</span><span style="position:absolute;left:397.38px;top:188.10px;color:#101010;letter-spacing:0.471px">City</span><span style="position:absolute;left:30.99px;top:208.85px;color:#151515;letter-spacing:0.471px">63</span><span style="position:absolute;left:187.96px;top:208.85px;color:#2222bc;letter-spacing:0.471px">Set</span><span style="position:absolute;left:229.84px;top:208.85px;color:#101010;letter-spacing:0.471px">psCaption</span><span style="position:absolute;left:334.55px;top:208.85px;color:#2222bc;letter-spacing:0.471px">to</span><span style="position:absolute;left:365.97px;top:208.85px;color:#101010;letter-spacing:0.471px">&quot;</span><span style="position:absolute;left:376.44px;top:208.85px;color:#862286;letter-spacing:0.471px">City</span><span style="position:absolute;left:418.32px;top:208.85px;color:#101010;letter-spacing:0.471px">&quot;</span><span style="position:absolute;left:30.99px;top:229.61px;color:#151515;letter-spacing:0.471px">64</span><span style="position:absolute;left:187.96px;top:229.61px;color:#2222bc;letter-spacing:0.471px">Set</span><span style="position:absolute;left:229.84px;top:229.61px;color:#101010;letter-spacing:0.471px">piWidth</span><span style="position:absolute;left:313.61px;top:229.61px;color:#2222bc;letter-spacing:0.471px">to</span><span style="position:absolute;left:345.03px;top:229.61px;color:#101010;letter-spacing:0.471px">50</span><span style="position:absolute;left:30.99px;top:250.36px;color:#151515;letter-spacing:0.471px">65</span><span style="position:absolute;left:187.96px;top:250.36px;color:#2222bc;letter-spacing:0.471px">Set</span><span style="position:absolute;left:229.84px;top:250.36px;color:#101010;letter-spacing:0.471px">psCSSClass</span><span style="position:absolute;left:345.03px;top:250.36px;color:#2222bc;letter-spacing:0.471px">to</span><span style="position:absolute;left:376.44px;top:250.36px;color:#101010;letter-spacing:0.471px">&quot;</span><span style="position:absolute;left:386.91px;top:250.36px;color:#862286;letter-spacing:0.471px">RowDetail</span><span style="position:absolute;left:481.15px;top:250.36px;color:#101010;letter-spacing:0.471px">&quot;</span><span style="position:absolute;left:30.99px;top:271.12px;color:#151515;letter-spacing:0.471px">66</span><span style="position:absolute;left:187.96px;top:271.12px;color:#2222bc;letter-spacing:0.471px">Set</span><span style="position:absolute;left:229.84px;top:271.12px;color:#101010;letter-spacing:0.471px">pbFixedWidth</span><span style="position:absolute;left:365.97px;top:271.12px;color:#2222bc;letter-spacing:0.471px">to</span><span style="position:absolute;left:397.38px;top:271.12px;color:#2222bc;letter-spacing:0.471px">True</span><span style="position:absolute;left:30.99px;top:291.87px;color:#151515;letter-spacing:0.471px">67</span><span style="position:absolute;left:187.96px;top:291.87px;color:#2222bc;letter-spacing:0.471px">Set</span><span style="position:absolute;left:229.84px;top:291.87px;color:#101010;letter-spacing:0.471px">peAlign</span><span style="position:absolute;left:313.61px;top:291.87px;color:#2222bc;letter-spacing:0.471px">to</span><span style="position:absolute;left:345.03px;top:291.87px;color:#101010;letter-spacing:0.471px">alignCenter</span><span style="position:absolute;left:30.99px;top:312.63px;color:#151515;letter-spacing:0.471px">68</span><span style="position:absolute;left:146.07px;top:312.63px;color:#2222bc;letter-spacing:0.471px">End_Object</span><span style="position:absolute;left:30.99px;top:333.38px;color:#151515;letter-spacing:0.471px">69</span><span style="position:absolute;left:30.99px;top:354.14px;color:#151515;letter-spacing:0.471px">70</span><span style="position:absolute;left:146.07px;top:354.14px;color:#2222bc;letter-spacing:0.471px">Object</span><span style="position:absolute;left:219.37px;top:354.14px;color:#101010;letter-spacing:0.471px">oWebColumn4</span><span style="position:absolute;left:345.03px;top:354.14px;color:#2222bc;letter-spacing:0.471px">is</span><span style="position:absolute;left:376.44px;top:354.14px;color:#2222bc;letter-spacing:0.471px">a</span><span style="position:absolute;left:397.38px;top:354.14px;color:#101010;letter-spacing:0.471px">cWebColumn</span><span style="position:absolute;left:30.99px;top:374.89px;color:#151515;letter-spacing:0.471px">71</span><span style="position:absolute;left:187.96px;top:374.89px;color:#2222bc;letter-spacing:0.471px">Entry_Item</span><span style="position:absolute;left:303.14px;top:374.89px;color:#101010;letter-spacing:0.471px">Customer</span><span style="position:absolute;left:386.91px;top:374.89px;color:#a03030;letter-spacing:0.471px">.</span><span style="position:absolute;left:397.38px;top:374.89px;color:#101010;letter-spacing:0.471px">State</span><span style="position:absolute;left:30.99px;top:395.64px;color:#151515;letter-spacing:0.471px">72</span><span style="position:absolute;left:187.96px;top:395.64px;color:#2222bc;letter-spacing:0.471px">Set</span><span style="position:absolute;left:229.84px;top:395.64px;color:#101010;letter-spacing:0.471px">psCaption</span><span style="position:absolute;left:334.55px;top:395.64px;color:#2222bc;letter-spacing:0.471px">to</span><span style="position:absolute;left:365.97px;top:395.64px;color:#101010;letter-spacing:0.471px">&quot;</span><span style="position:absolute;left:376.44px;top:395.64px;color:#862286;letter-spacing:0.471px">State</span><span style="position:absolute;left:428.80px;top:395.64px;color:#101010;letter-spacing:0.471px">&quot;</span><span style="position:absolute;left:30.99px;top:416.40px;color:#151515;letter-spacing:0.471px">73</span><span style="position:absolute;left:187.96px;top:416.40px;color:#2222bc;letter-spacing:0.471px">Set</span><span style="position:absolute;left:229.84px;top:416.40px;color:#101010;letter-spacing:0.471px">piWidth</span><span style="position:absolute;left:313.61px;top:416.40px;color:#2222bc;letter-spacing:0.471px">to</span><span style="position:absolute;left:345.03px;top:416.40px;color:#101010;letter-spacing:0.471px">25</span><span style="position:absolute;left:30.99px;top:437.15px;color:#151515;letter-spacing:0.471px">74</span><span style="position:absolute;left:187.96px;top:437.15px;color:#2222bc;letter-spacing:0.471px">Set</span><span style="position:absolute;left:229.84px;top:437.15px;color:#101010;letter-spacing:0.471px">psCSSClass</span><span style="position:absolute;left:345.03px;top:437.15px;color:#2222bc;letter-spacing:0.471px">to</span><span style="position:absolute;left:376.44px;top:437.15px;color:#101010;letter-spacing:0.471px">&quot;</span><span style="position:absolute;left:386.91px;top:437.15px;color:#862286;letter-spacing:0.471px">RowDetail</span><span style="position:absolute;left:481.15px;top:437.15px;color:#101010;letter-spacing:0.471px">&quot;</span><span style="position:absolute;left:30.99px;top:457.91px;color:#151515;letter-spacing:0.471px">75</span><span style="position:absolute;left:187.96px;top:457.91px;color:#2222bc;letter-spacing:0.471px">Set</span><span style="position:absolute;left:229.84px;top:457.91px;color:#101010;letter-spacing:0.471px">pbFixedWidth</span><span style="position:absolute;left:365.97px;top:457.91px;color:#2222bc;letter-spacing:0.471px">to</span><span style="position:absolute;left:397.38px;top:457.91px;color:#2222bc;letter-spacing:0.471px">True</span><span style="position:absolute;left:30.99px;top:478.66px;color:#151515;letter-spacing:0.471px">76</span><span style="position:absolute;left:187.96px;top:478.66px;color:#2222bc;letter-spacing:0.471px">Set</span><span style="position:absolute;left:229.84px;top:478.66px;color:#101010;letter-spacing:0.471px">peAlign</span><span style="position:absolute;left:313.61px;top:478.66px;color:#2222bc;letter-spacing:0.471px">to</span><span style="position:absolute;left:345.03px;top:478.66px;color:#101010;letter-spacing:0.471px">alignCenter</span><span style="position:absolute;left:30.99px;top:499.42px;color:#151515;letter-spacing:0.471px">77</span><span style="position:absolute;left:146.07px;top:499.42px;color:#2222bc;letter-spacing:0.471px">End_Object</span><span style="position:absolute;left:30.99px;top:520.17px;color:#151515;letter-spacing:0.471px">78</span><span style="position:absolute;left:30.99px;top:540.93px;color:#151515;letter-spacing:0.471px">79</span><span style="position:absolute;left:146.07px;top:540.93px;color:#2222bc;letter-spacing:0.471px">Object</span><span style="position:absolute;left:219.37px;top:540.93px;color:#101010;letter-spacing:0.471px">oWebColumn5</span><span style="position:absolute;left:345.03px;top:540.93px;color:#2222bc;letter-spacing:0.471px">is</span><span style="position:absolute;left:376.44px;top:540.93px;color:#2222bc;letter-spacing:0.471px">a</span><span style="position:absolute;left:397.38px;top:540.93px;color:#101010;letter-spacing:0.471px">cWebColumn</span><span style="position:absolute;left:30.99px;top:561.68px;color:#151515;letter-spacing:0.471px">80</span><span style="position:absolute;left:187.96px;top:561.68px;color:#2222bc;letter-spacing:0.471px">Entry_Item</span><span style="position:absolute;left:303.14px;top:561.68px;color:#101010;letter-spacing:0.471px">Customer</span><span style="position:absolute;left:386.91px;top:561.68px;color:#a03030;letter-spacing:0.471px">.</span><span style="position:absolute;left:397.38px;top:561.68px;color:#101010;letter-spacing:0.471px">Zip</span><span style="position:absolute;left:30.99px;top:582.44px;color:#151515;letter-spacing:0.471px">81</span><span style="position:absolute;left:187.96px;top:582.44px;color:#2222bc;letter-spacing:0.471px">Set</span><span style="position:absolute;left:229.84px;top:582.44px;color:#101010;letter-spacing:0.471px">psCaption</span><span style="position:absolute;left:334.55px;top:582.44px;color:#2222bc;letter-spacing:0.471px">to</span><span style="position:absolute;left:365.97px;top:582.44px;color:#101010;letter-spacing:0.471px">&quot;</span><span style="position:absolute;left:376.44px;top:582.44px;color:#862286;letter-spacing:0.471px">Zip</span><span style="position:absolute;left:407.85px;top:582.44px;color:#101010;letter-spacing:0.471px">&quot;</span><span style="position:absolute;left:30.99px;top:603.19px;color:#151515;letter-spacing:0.471px">82</span><span style="position:absolute;left:187.96px;top:603.19px;color:#2222bc;letter-spacing:0.471px">Set</span><span style="position:absolute;left:229.84px;top:603.19px;color:#101010;letter-spacing:0.471px">piWidth</span><span style="position:absolute;left:313.61px;top:603.19px;color:#2222bc;letter-spacing:0.471px">to</span><span style="position:absolute;left:345.03px;top:603.19px;color:#101010;letter-spacing:0.471px">50</span><span style="position:absolute;left:30.99px;top:623.95px;color:#151515;letter-spacing:0.471px">83</span><span style="position:absolute;left:187.96px;top:623.95px;color:#2222bc;letter-spacing:0.471px">Set</span><span style="position:absolute;left:229.84px;top:623.95px;color:#101010;letter-spacing:0.471px">psCSSClass</span><span style="position:absolute;left:345.03px;top:623.95px;color:#2222bc;letter-spacing:0.471px">to</span><span style="position:absolute;left:376.44px;top:623.95px;color:#101010;letter-spacing:0.471px">&quot;</span><span style="position:absolute;left:386.91px;top:623.95px;color:#862286;letter-spacing:0.471px">RowDetail</span><span style="position:absolute;left:481.15px;top:623.95px;color:#101010;letter-spacing:0.471px">&quot;</span><span style="position:absolute;left:30.99px;top:644.70px;color:#151515;letter-spacing:0.471px">84</span><span style="position:absolute;left:187.96px;top:644.70px;color:#2222bc;letter-spacing:0.471px">Set</span><span style="position:absolute;left:229.84px;top:644.70px;color:#101010;letter-spacing:0.471px">pbFixedWidth</span><span style="position:absolute;left:365.97px;top:644.70px;color:#2222bc;letter-spacing:0.471px">to</span><span style="position:absolute;left:397.38px;top:644.70px;color:#2222bc;letter-spacing:0.471px">True</span><span style="position:absolute;left:30.99px;top:665.46px;color:#151515;letter-spacing:0.471px">85</span><span style="position:absolute;left:146.07px;top:665.46px;color:#2222bc;letter-spacing:0.471px">End_Object</span></div>
<div style="left:754.8px;top:629.4px;width:2.3px;height:21.2px;background:#000;"></div>
<svg style="left:788px;top:621px;" width="7" height="16" viewBox="0 0 7 16"><path d="M0 0.5H7M0 15.5H7M3.5 0.5V15.5" stroke="#000" stroke-width="1" fill="none"/></svg>
<div style="left:400px;top:273px;width:469px;height:407px;border:3.4px solid #e8420a;box-sizing:border-box;"></div>
<div style="left:1609px;top:123.4px;width:16px;height:721.6px;background:#f0f0f0;"></div>
<div style="left:1609px;top:123.4px;width:15px;height:6.4px;background:#c6c6ce;"></div>
<div style="left:1609px;top:545px;width:15px;height:244px;background:#cdcdcd;"></div>
<svg style="left:1612px;top:135px;" width="9" height="7" viewBox="0 0 9 7"><path d="M0.8 6L4.5 2L8.2 6" stroke="#5a5a5a" stroke-width="2.2" fill="none"/></svg>
<svg style="left:1612px;top:832px;" width="9" height="7" viewBox="0 0 9 7"><path d="M0.8 1L4.5 5L8.2 1" stroke="#5a5a5a" stroke-width="2.2" fill="none"/></svg>
<div style="left:316px;top:845px;width:1309px;height:16px;background:#f0f0f0;"></div>
<div style="left:316px;top:845px;width:6.5px;height:15px;background:#c6c6ce;"></div>
<div style="left:340px;top:845px;width:859px;height:15px;background:#cdcdcd;"></div>
<svg style="left:327px;top:848px;" width="7" height="9" viewBox="0 0 7 9"><path d="M6 0.8L2 4.5L6 8.2" stroke="#5a5a5a" stroke-width="2.2" fill="none"/></svg>
<svg style="left:1596px;top:848px;" width="7" height="9" viewBox="0 0 7 9"><path d="M1 0.8L5 4.5L1 8.2" stroke="#5a5a5a" stroke-width="2.2" fill="none"/></svg>
<div style="left:314px;top:867px;width:1313px;height:20px;background:#bccadb;"></div>
<div style="left:314px;top:867px;width:1313px;height:1px;background:#9fa9b6;"></div>
<div style="left:314px;top:867px;width:1px;height:20px;background:#a9b6c6;"></div>
<div style="left:1626px;top:867px;width:1px;height:20px;background:#8d97a6;"></div>
<span style="left:318.4px;top:870.30px;font-size:12px;line-height:16px;color:#101010;letter-spacing:0.336px;">Output</span>
<svg style="left:1597px;top:872px;" width="8" height="10" viewBox="0 0 8 10"><path d="M2.5 1.2H5.5" stroke="#5a6068" stroke-width="0.8"/><path d="M2.5 1V6.5M5.6 1V6.5" stroke="#000" stroke-width="1.15" fill="none"/><path d="M0.8 6.6H7.2" stroke="#000" stroke-width="1.2"/><path d="M4 7.2V9.6" stroke="#4a4e58" stroke-width="1"/></svg>
<svg style="left:1614px;top:872.2px;" width="8" height="8" viewBox="0 0 8 8"><path d="M1 1L7 7.3M7 1L1 7.3" stroke="#22222a" stroke-width="1.25"/></svg>
<div style="left:362.5px;top:891px;width:1px;height:18px;background:#d2d2d8;"></div>
<div style="left:412.5px;top:891px;width:1px;height:18px;background:#d2d2d8;"></div>
<div style="left:314px;top:913px;width:1313px;height:120px;background:#ffffff;border:1px solid #85858c;box-sizing:border-box;"></div>
<div style="left:1609px;top:914px;width:17px;height:118px;background:#f0f0f0;"></div>
<div style="left:1609px;top:998.3px;width:15px;height:15.2px;background:#cdcdcd;"></div>
<svg style="left:1612px;top:920px;" width="9" height="7" viewBox="0 0 9 7"><path d="M0.8 6L4.5 2L8.2 6" stroke="#5a5a5a" stroke-width="2.2" fill="none"/></svg>
<svg style="left:1612px;top:1019px;" width="9" height="7" viewBox="0 0 9 7"><path d="M0.8 1L4.5 5L8.2 1" stroke="#5a5a5a" stroke-width="2.2" fill="none"/></svg>
<div style="left:327px;top:914px;width:1px;height:100px;background:repeating-linear-gradient(to bottom,#404040 0 1px,transparent 1px 2px);"></div>
<div style="left:342px;top:914px;width:1px;height:64px;background:repeating-linear-gradient(to bottom,#404040 0 1px,transparent 1px 2px);"></div>
<span style="left:371px;top:916.00px;font-size:12px;line-height:16px;color:#1e1e1e;letter-spacing:-0.275px;">Total Pages    : 0</span>
<div style="left:343px;top:924px;width:6px;height:1px;background:repeating-linear-gradient(to right,#404040 0 1px,transparent 1px 2px);"></div>
<svg style="left:354px;top:918.5px;" width="9" height="11" viewBox="0 0 9 11"><path d="M1 0.8V10.2L7.6 5.5Z" fill="#fff" stroke="#3a3a3a" stroke-width="1"/></svg>
<span style="left:371px;top:934.00px;font-size:12px;line-height:16px;color:#1e1e1e;letter-spacing:-0.411px;">Static Data    : 331673</span>
<div style="left:343px;top:942px;width:6px;height:1px;background:repeating-linear-gradient(to right,#404040 0 1px,transparent 1px 2px);"></div>
<svg style="left:354px;top:936.5px;" width="9" height="11" viewBox="0 0 9 11"><path d="M1 0.8V10.2L7.6 5.5Z" fill="#fff" stroke="#3a3a3a" stroke-width="1"/></svg>
<span style="left:371px;top:952.00px;font-size:12px;line-height:16px;color:#1e1e1e;letter-spacing:-0.475px;">Message area   : 206167</span>
<div style="left:343px;top:960px;width:6px;height:1px;background:repeating-linear-gradient(to right,#404040 0 1px,transparent 1px 2px);"></div>
<svg style="left:354px;top:954.5px;" width="9" height="11" viewBox="0 0 9 11"><path d="M1 0.8V10.2L7.6 5.5Z" fill="#fff" stroke="#3a3a3a" stroke-width="1"/></svg>
<span style="left:371px;top:970.00px;font-size:12px;line-height:16px;color:#1e1e1e;letter-spacing:-0.274px;">Total Blocks   : 13139</span>
<div style="left:343px;top:978px;width:6px;height:1px;background:repeating-linear-gradient(to right,#404040 0 1px,transparent 1px 2px);"></div>
<svg style="left:354px;top:972.5px;" width="9" height="11" viewBox="0 0 9 11"><path d="M1 0.8V10.2L7.6 5.5Z" fill="#fff" stroke="#3a3a3a" stroke-width="1"/></svg>
<div style="left:328px;top:996px;width:6px;height:1px;background:repeating-linear-gradient(to right,#404040 0 1px,transparent 1px 2px);"></div>
<div style="left:328px;top:1014px;width:6px;height:1px;background:repeating-linear-gradient(to right,#404040 0 1px,transparent 1px 2px);"></div>
<span style="left:356px;top:988.00px;font-size:12px;line-height:16px;color:#1e1e1e;letter-spacing:0.288px;">----Compile Finished----</span>
<div style="left:353px;top:1004.5px;width:213px;height:18px;background:#efefef;"></div>
<span style="left:356px;top:1005.80px;font-size:12px;line-height:16px;color:#1e1e1e;letter-spacing:-0.034px;">Starting web application: WebListDemo</span>
<svg style="left:335.5px;top:988.5px;" width="15" height="15" viewBox="0 0 15 15"><circle cx="7.5" cy="7.5" r="7" fill="#232323"/><rect x="4.6" y="4.6" width="5.8" height="5.8" rx="0.8" fill="#e2e2e2"/></svg>
<svg style="left:335.5px;top:1006.5px;" width="15" height="15" viewBox="0 0 15 15"><circle cx="7.5" cy="7.5" r="7" fill="#1b7fd4"/><rect x="6.6" y="6.3" width="1.9" height="5.2" fill="#fff"/><rect x="6.6" y="3.2" width="1.9" height="1.9" fill="#fff"/></svg>
<div style="left:315px;top:1034px;width:68px;height:23px;background:#ffffff;"></div>
<div style="left:535.7px;top:1036px;width:1px;height:19px;background:#d2d2d8;"></div>
<div style="left:626px;top:1036px;width:1px;height:19px;background:#d2d2d8;"></div>
<div style="left:716.7px;top:1036px;width:1px;height:19px;background:#d2d2d8;"></div>
<div style="left:921.7px;top:1036px;width:1px;height:19px;background:#d2d2d8;"></div>
<div style="left:383.5px;top:1036px;width:1px;height:19px;background:#d2d2d8;"></div>
<span style="left:338.3px;top:1037.60px;font-size:12px;line-height:16px;color:#1e1e1e;letter-spacing:0.336px;">Output</span>
<span style="left:406.7px;top:1037.00px;font-size:12px;line-height:16px;color:#1e1e1e;letter-spacing:-0.159px;">To Do List [WebApp.src]</span>
<span style="left:560px;top:1037.00px;font-size:12px;line-height:16px;color:#1e1e1e;letter-spacing:-0.308px;">Find Results</span>
<span style="left:651px;top:1037.00px;font-size:12px;line-height:16px;color:#1e1e1e;letter-spacing:-0.107px;">Breakpoints</span>
<span style="left:741px;top:1037.00px;font-size:12px;line-height:16px;color:#1e1e1e;letter-spacing:-0.028px;">Problem Resolution [WebApp.src]</span>
<svg style="left:320px;top:892px;" width="16" height="16" viewBox="0 0 16 16"><path d="M3 4H7.5" stroke="#0b58a8" stroke-width="1.7"/><path d="M0.5 4L4 0.8V7.2Z" fill="#0b58a8"/><circle cx="9.6" cy="8.2" r="3.1" fill="none" stroke="#55555c" stroke-width="1.2"/><path d="M7.4 10.4L4.4 13.8" stroke="#55555c" stroke-width="1.7" stroke-linecap="round"/></svg>
<svg style="left:342px;top:892px;" width="16" height="16" viewBox="0 0 16 16"><path d="M0.5 4H5" stroke="#0b58a8" stroke-width="1.7"/><path d="M7.5 4L4 0.8V7.2Z" fill="#0b58a8"/><circle cx="10" cy="8.2" r="3.1" fill="none" stroke="#55555c" stroke-width="1.2"/><path d="M7.8 10.4L4.8 13.8" stroke="#55555c" stroke-width="1.7" stroke-linecap="round"/></svg>
<svg style="left:369px;top:892px;" width="16" height="16" viewBox="0 0 16 16"><path d="M5.6 4V1.6H10.8L13.6 4.4V10.6H10" fill="none" stroke="#2d2d36" stroke-width="1.1"/><path d="M10.6 1.8V4.6H13.4" fill="none" stroke="#2d2d36" stroke-width="0.9"/><path d="M2.2 4.8H7.4L10 7.4V14.4H2.2Z" fill="#fff" stroke="#2d2d36" stroke-width="1.1"/><path d="M7.2 5V7.6H9.8" fill="none" stroke="#2d2d36" stroke-width="0.9"/></svg>
<svg style="left:390.5px;top:892px;" width="16" height="16" viewBox="0 0 16 16"><path d="M1.6 13.2L3.6 14.6L13.6 2.6L12.6 1.4Z" fill="#a5281b"/><path d="M3 1.8L4 1.2L14.4 13L13.2 13.8Z" fill="#a5281b"/><path d="M1.4 13.4Q1 14.8 3.4 14.8L6.5 11L5 9.4Z" fill="#a5281b"/></svg>
<svg style="left:418px;top:892px;" width="16" height="16" viewBox="0 0 16 16"><path d="M2 9V1.4H10" fill="none" stroke="#77777e" stroke-width="1"/><path d="M4 11V3.4H12" fill="none" stroke="#55555c" stroke-width="1"/><rect x="6" y="5.4" width="8.4" height="8.6" fill="#fff" stroke="#2d2d36" stroke-width="1.2"/><path d="M7.8 9.7H12.6M10.2 7.3V12.1" stroke="#2d5fa8" stroke-width="1.3"/></svg>
<svg style="left:440px;top:892px;" width="16" height="16" viewBox="0 0 16 16"><path d="M2 9V1.4H10" fill="none" stroke="#77777e" stroke-width="1"/><path d="M4 11V3.4H12" fill="none" stroke="#55555c" stroke-width="1"/><rect x="6" y="5.4" width="8.4" height="8.6" fill="#fff" stroke="#2d2d36" stroke-width="1.2"/><path d="M7.8 9.7H12.6" stroke="#2d5fa8" stroke-width="1.3"/></svg>
<svg style="left:319.5px;top:1038.5px;" width="16" height="15" viewBox="0 0 16 15"><path d="M6.6 2.6V1H1V13.8H6.6V12.4" fill="none" stroke="#2d2d36" stroke-width="1.1"/><path d="M3.2 7.4H10.4" stroke="#2d2d36" stroke-width="1.7"/><path d="M8.4 3.6L13.2 7.4L8.4 11.2" fill="none" stroke="#2d2d36" stroke-width="1.8"/></svg>
<svg style="left:388px;top:1038px;" width="14" height="15" viewBox="0 0 14 15"><path d="M4 3.4H2.4V13.6H11V3.4H9.4" fill="none" stroke="#2d2d36" stroke-width="1.1"/><path d="M4.8 3.8Q4.8 1.2 6.7 1.2Q8.6 1.2 8.6 3.8" fill="none" stroke="#2d2d36" stroke-width="1.1"/><path d="M4.2 8.4L6.2 11L10.4 5.6" fill="none" stroke="#2d2d36" stroke-width="1.5"/></svg>
<svg style="left:541.5px;top:1038px;" width="14" height="15" viewBox="0 0 14 15"><path d="M3.8 5V1.8H9L12.2 5V13.4H7.4" fill="none" stroke="#2d2d36" stroke-width="1.1"/><path d="M8.8 1.8V5.2H12.2" fill="none" stroke="#2d2d36" stroke-width="0.9"/><circle cx="5.6" cy="9.4" r="2.1" fill="#fff" stroke="#0b58a8" stroke-width="1.2"/><path d="M4 11L1.4 13.8" stroke="#0b58a8" stroke-width="1.6"/></svg>
<svg style="left:632px;top:1037px;" width="16" height="16" viewBox="0 0 16 16"><path d="M5 2.2H14.4V11.2H9.4" fill="#fff" stroke="#2d2d36" stroke-width="1.1"/><rect x="4.4" y="1" width="10.6" height="2.6" fill="#2d2d36"/><circle cx="5.4" cy="10.2" r="4.6" fill="#e21b0c"/></svg>
<svg style="left:722px;top:1037px;" width="16" height="16" viewBox="0 0 16 16"><rect x="0.6" y="1.8" width="14.8" height="12.2" fill="#fff" stroke="#2d2d36" stroke-width="1.1"/><rect x="0" y="1.2" width="16" height="2.4" fill="#2d2d36"/><path d="M5 6L8.6 12.5H1.4Z" fill="#f2c21a"/><rect x="4.5" y="7.8" width="1" height="2.4" fill="#2d2d36"/><rect x="4.5" y="10.8" width="1" height="1" fill="#2d2d36"/><path d="M9.3 8.6L11.2 10.8L14.4 5.6" fill="none" stroke="#2d2d36" stroke-width="1.5"/></svg>
<svg style="left:6.5px;top:775px;" width="16" height="16" viewBox="0 0 16 16"><path d="M5.6 1.2H15V9" fill="none" stroke="#2d2d36" stroke-width="1.6"/><path d="M3.6 3.6H12.8V6" fill="none" stroke="#2d2d36" stroke-width="1.4"/><rect x="0.8" y="6.6" width="9" height="8.4" fill="#2d2d36"/><path d="M0.8 9.6H9.8M0.8 12.2H9.8M3.8 8.4V15M6.8 8.4V15" stroke="#eeeef2" stroke-width="0.8"/><circle cx="10.8" cy="9.6" r="2.5" fill="#eeeef2" stroke="#55555c" stroke-width="1.1"/><path d="M12.6 11.6L15.2 14.6" stroke="#55555c" stroke-width="1.5"/></svg>
<svg style="left:108px;top:775.5px;" width="15" height="15" viewBox="0 0 15 15"><rect x="0.6" y="1.4" width="13.4" height="13" fill="#fdf3e7" stroke="#2d2d36" stroke-width="1.1"/><rect x="0" y="0.8" width="14.6" height="2.6" fill="#2d2d36"/><path d="M2.4 6.4L4.6 4.6L7 6.4L4.6 8.2Z" fill="#d98a2a"/><path d="M7 6.4H10.4V9" stroke="#d98a2a" stroke-width="1" fill="none"/><path d="M8.4 9.4H11.6V12.2H8.4Z" fill="#e3a85a"/><path d="M10 12.2V13.4" stroke="#d98a2a" stroke-width="1"/></svg>
<svg style="left:206px;top:776px;" width="16" height="16" viewBox="0 0 16 16"><path d="M8.6 1.2C3.6 1.2 0.8 4.6 0.8 8.2C0.8 12 3.8 14.8 8 14.8C11.6 14.8 14.6 13.4 14.8 11.4C15 9.6 12 10.4 11.2 8.8C10.4 7.2 14.4 6.6 14.2 4.4C14 2.4 11.4 1.2 8.6 1.2Z" fill="#3c3c42"/><circle cx="6.6" cy="4" r="1" fill="#d8d8dc"/><circle cx="3.8" cy="6.2" r="1" fill="#d8d8dc"/><circle cx="3.4" cy="9.6" r="1" fill="#d8d8dc"/><circle cx="5.6" cy="12.2" r="1" fill="#d8d8dc"/><circle cx="10" cy="3.6" r="0.9" fill="#d8d8dc"/></svg>
<svg style="left:9px;top:824px;" width="14" height="15" viewBox="0 0 14 15"><path d="M1 0.8H6.6L9.4 3.6V12.4H1Z" fill="#fff" stroke="#2d2d36" stroke-width="1.1"/><path d="M6.4 1V3.8H9.2" fill="none" stroke="#2d2d36" stroke-width="0.9"/><path d="M2.6 5.2H7.6M2.6 7.2H7.6M2.6 9.2H5.4" stroke="#2d2d36" stroke-width="0.9"/><rect x="6.6" y="8" width="6.4" height="6.4" fill="#1b5fb0"/><rect x="8.2" y="8" width="3" height="2.2" fill="#fff"/></svg>
<div style="left:1631px;top:101px;width:289px;height:20px;background:#bccadb;"></div>
<div style="left:1631px;top:101px;width:289px;height:1px;background:#9fa9b6;"></div>
<div style="left:1631px;top:101px;width:1px;height:20px;background:#a9b6c6;"></div>
<div style="left:1919px;top:101px;width:1px;height:20px;background:#8d97a6;"></div>
<span style="left:1635.4px;top:104.30px;font-size:12px;line-height:16px;color:#101010;letter-spacing:-0.265px;">Workspace Explorer</span>
<svg style="left:1890px;top:106px;" width="8" height="10" viewBox="0 0 8 10"><path d="M2.5 1.2H5.5" stroke="#5a6068" stroke-width="0.8"/><path d="M2.5 1V6.5M5.6 1V6.5" stroke="#000" stroke-width="1.15" fill="none"/><path d="M0.8 6.6H7.2" stroke="#000" stroke-width="1.2"/><path d="M4 7.2V9.6" stroke="#4a4e58" stroke-width="1"/></svg>
<svg style="left:1907px;top:106.2px;" width="8" height="8" viewBox="0 0 8 8"><path d="M1 1L7 7.3M7 1L1 7.3" stroke="#22222a" stroke-width="1.25"/></svg>
<span style="left:1636.7px;top:129.80px;font-size:12px;line-height:16px;color:#1e1e1e;letter-spacing:-0.155px;">Current Project:</span>
<div style="left:1726px;top:126px;width:193px;height:23.5px;background:#e3e3e5;border:1px solid #b0b0b4;box-sizing:border-box;"></div>
<span style="left:1730px;top:129.80px;font-size:12px;line-height:16px;color:#1e1e1e;letter-spacing:-0.148px;">WebApp.src</span>
<svg style="left:1905px;top:135px;" width="10" height="7" viewBox="0 0 10 7"><path d="M1 1L5 5L9 1" stroke="#333" stroke-width="1.1" fill="none"/></svg>
<div style="left:1631px;top:154px;width:288px;height:322px;background:#ffffff;border:1px solid #85858c;box-sizing:border-box;"></div>
<div style="left:1671px;top:157px;width:68px;height:16px;background:#ececec;"></div>
<span style="left:1673.3px;top:157.80px;font-size:12px;line-height:16px;color:#1e1e1e;letter-spacing:-0.193px;">WebApp.src</span>
<svg style="left:1640.0px;top:162.0px;" width="9" height="9" viewBox="0 0 9 9"><rect x="0.5" y="0.5" width="8" height="8" fill="#fbfbfb" stroke="#9a9a9a"/><path d="M2 4.5H7" stroke="#44448a" stroke-width="1"/></svg>
<div style="left:1659px;top:171px;width:1px;height:67px;background:repeating-linear-gradient(to bottom,#404040 0 1px,transparent 1px 2px);"></div>
<span style="left:1688.4px;top:175.00px;font-size:12px;line-height:16px;color:#1e1e1e;letter-spacing:-0.365px;">Web Views (7)</span>
<svg style="left:1655.0px;top:180.0px;" width="9" height="9" viewBox="0 0 9 9"><rect x="0.5" y="0.5" width="8" height="8" fill="#fbfbfb" stroke="#9a9a9a"/><path d="M2 4.5H7" stroke="#44448a" stroke-width="1"/><path d="M4.5 2V7" stroke="#44448a" stroke-width="1"/></svg>
<div style="left:1664px;top:184px;width:3px;height:1px;background:repeating-linear-gradient(to right,#404040 0 1px,transparent 1px 2px);"></div>
<span style="left:1688.4px;top:193.00px;font-size:12px;line-height:16px;color:#1e1e1e;letter-spacing:-0.107px;">Web Components (2)</span>
<svg style="left:1655.0px;top:198.0px;" width="9" height="9" viewBox="0 0 9 9"><rect x="0.5" y="0.5" width="8" height="8" fill="#fbfbfb" stroke="#9a9a9a"/><path d="M2 4.5H7" stroke="#44448a" stroke-width="1"/><path d="M4.5 2V7" stroke="#44448a" stroke-width="1"/></svg>
<div style="left:1664px;top:202px;width:3px;height:1px;background:repeating-linear-gradient(to right,#404040 0 1px,transparent 1px 2px);"></div>
<span style="left:1688.4px;top:211.00px;font-size:12px;line-height:16px;color:#1e1e1e;letter-spacing:-0.223px;">Data Dictionaries (1)</span>
<svg style="left:1655.0px;top:216.0px;" width="9" height="9" viewBox="0 0 9 9"><rect x="0.5" y="0.5" width="8" height="8" fill="#fbfbfb" stroke="#9a9a9a"/><path d="M2 4.5H7" stroke="#44448a" stroke-width="1"/><path d="M4.5 2V7" stroke="#44448a" stroke-width="1"/></svg>
<div style="left:1664px;top:220px;width:3px;height:1px;background:repeating-linear-gradient(to right,#404040 0 1px,transparent 1px 2px);"></div>
<span style="left:1688.4px;top:229.00px;font-size:12px;line-height:16px;color:#1e1e1e;letter-spacing:-0.334px;">Other Files (9)</span>
<svg style="left:1655.0px;top:234.0px;" width="9" height="9" viewBox="0 0 9 9"><rect x="0.5" y="0.5" width="8" height="8" fill="#fbfbfb" stroke="#9a9a9a"/><path d="M2 4.5H7" stroke="#44448a" stroke-width="1"/><path d="M4.5 2V7" stroke="#44448a" stroke-width="1"/></svg>
<div style="left:1664px;top:238px;width:3px;height:1px;background:repeating-linear-gradient(to right,#404040 0 1px,transparent 1px 2px);"></div>
<div style="left:1649px;top:166px;width:3px;height:1px;background:repeating-linear-gradient(to right,#404040 0 1px,transparent 1px 2px);"></div>
<div style="left:1631px;top:482px;width:289px;height:19px;background:#bccadb;"></div>
<div style="left:1631px;top:482px;width:289px;height:1px;background:#9fa9b6;"></div>
<div style="left:1631px;top:482px;width:1px;height:19px;background:#a9b6c6;"></div>
<div style="left:1919px;top:482px;width:1px;height:19px;background:#8d97a6;"></div>
<span style="left:1635.4px;top:485.30px;font-size:12px;line-height:16px;color:#101010;letter-spacing:-0.160px;">DDO Explorer [RowLayoutDemo.wo]</span>
<svg style="left:1890px;top:487px;" width="8" height="10" viewBox="0 0 8 10"><path d="M2.5 1.2H5.5" stroke="#5a6068" stroke-width="0.8"/><path d="M2.5 1V6.5M5.6 1V6.5" stroke="#000" stroke-width="1.15" fill="none"/><path d="M0.8 6.6H7.2" stroke="#000" stroke-width="1.2"/><path d="M4 7.2V9.6" stroke="#4a4e58" stroke-width="1"/></svg>
<svg style="left:1907px;top:487.2px;" width="8" height="8" viewBox="0 0 8 8"><path d="M1 1L7 7.3M7 1L1 7.3" stroke="#22222a" stroke-width="1.25"/></svg>
<div style="left:1701.5px;top:505px;width:1px;height:19px;background:#d2d2d8;"></div>
<div style="left:1751.5px;top:505px;width:1px;height:19px;background:#d2d2d8;"></div>
<div style="left:1631px;top:531px;width:287px;height:502px;background:#ffffff;border:1px solid #85858c;box-sizing:border-box;"></div>
<div style="left:1644px;top:548px;width:1px;height:27px;background:repeating-linear-gradient(to bottom,#404040 0 1px,transparent 1px 2px);"></div>
<svg style="left:1640.0px;top:539.0px;" width="9" height="9" viewBox="0 0 9 9"><rect x="0.5" y="0.5" width="8" height="8" fill="#fbfbfb" stroke="#9a9a9a"/><path d="M2 4.5H7" stroke="#44448a" stroke-width="1"/></svg>
<svg style="left:1640.0px;top:575.0px;" width="9" height="9" viewBox="0 0 9 9"><rect x="0.5" y="0.5" width="8" height="8" fill="#fbfbfb" stroke="#9a9a9a"/><path d="M2 4.5H7" stroke="#44448a" stroke-width="1"/><path d="M4.5 2V7" stroke="#44448a" stroke-width="1"/></svg>
<div style="left:1649px;top:543px;width:4px;height:1px;background:repeating-linear-gradient(to right,#404040 0 1px,transparent 1px 2px);"></div>
<div style="left:1649px;top:579px;width:4px;height:1px;background:repeating-linear-gradient(to right,#404040 0 1px,transparent 1px 2px);"></div>
<div style="left:1659px;top:551px;width:1px;height:10px;background:repeating-linear-gradient(to bottom,#404040 0 1px,transparent 1px 2px);"></div>
<div style="left:1659px;top:561px;width:8px;height:1px;background:repeating-linear-gradient(to right,#404040 0 1px,transparent 1px 2px);"></div>
<span style="left:1673.8px;top:533.80px;font-size:12px;line-height:16px;color:#000;letter-spacing:-0.183px;font-weight:bold;">DDOs for oRowLayoutDemo</span>
<span style="left:1688.9px;top:552.00px;font-size:12px;line-height:16px;color:#1e1e1e;letter-spacing:-0.061px;">cCustomerDataDictionary [Main DDO]</span>
<span style="left:1673.8px;top:569.80px;font-size:12px;line-height:16px;color:#000;letter-spacing:-0.225px;font-weight:bold;">DDO Column Selector</span>
<div style="left:1765px;top:1034px;width:151px;height:23px;background:#f8f8fa;"></div>
<div style="left:1633px;top:1035px;width:132px;height:21px;background:#ececf0;border:1px solid #dcdce2;box-sizing:border-box;"></div>
<span style="left:1657.4px;top:1037.00px;font-size:12px;line-height:16px;color:#1e1e1e;letter-spacing:-0.138px;">Properties (Inactive)</span>
<span style="left:1788.8px;top:1037.30px;font-size:12px;line-height:16px;color:#1e1e1e;letter-spacing:-0.357px;">DDO Explorer [RowLa...</span>
<svg style="left:1652px;top:157px;" width="16" height="16" viewBox="0 0 16 16"><path d="M1.4 2.4H14.6V12.6H9" fill="none" stroke="#333338" stroke-width="1.1"/><rect x="0.9" y="1.2" width="14.2" height="2.6" fill="#333338"/><circle cx="4.6" cy="11.4" r="4.2" fill="#fff" stroke="#333338" stroke-width="1.1"/><path d="M0.39999999999999947 11.4H8.8M4.6 7.2V15.600000000000001M1.03 9.30H8.17M1.03 13.50H8.17M2.71 7.62V15.18M6.49 7.62V15.18" stroke="#333338" stroke-width="0.8" fill="none"/></svg>
<svg style="left:1667px;top:175px;" width="16" height="16" viewBox="0 0 16 16"><path d="M2 2.4H14.6V12.2H9.4" fill="none" stroke="#333338" stroke-width="1.1"/><rect x="1.5" y="1.2" width="13.6" height="2.6" fill="#333338"/><path d="M8.6 6H12.6" stroke="#333338" stroke-width="1.4"/><rect x="10.6" y="8.6" width="2" height="1.8" fill="#333338"/><circle cx="4.8" cy="11.4" r="4.2" fill="#fff" stroke="#333338" stroke-width="1.1"/><path d="M0.5999999999999996 11.4H9.0M4.8 7.2V15.600000000000001M1.23 9.30H8.37M1.23 13.50H8.37M2.91 7.62V15.18M6.69 7.62V15.18" stroke="#333338" stroke-width="0.8" fill="none"/></svg>
<svg style="left:1667px;top:193px;" width="16" height="16" viewBox="0 0 16 16"><circle cx="11.8" cy="4.4" r="2.9" fill="#fff" stroke="#333338" stroke-width="1"/><path d="M11.8 2.4V6.6M10.4 4L11.8 2.6L13.2 4" fill="none" stroke="#333338" stroke-width="0.8"/><circle cx="5.4" cy="10.6" r="4.4" fill="#fff" stroke="#333338" stroke-width="1.1"/><path d="M1.0 10.6H9.8M5.4 6.199999999999999V15.0M1.66 8.40H9.14M1.66 12.80H9.14M3.42 6.64V14.56M7.38 6.64V14.56" stroke="#333338" stroke-width="0.8" fill="none"/></svg>
<svg style="left:1667px;top:211px;" width="16" height="16" viewBox="0 0 16 16"><path d="M1.2 2.6H7.4V12.2H1.2ZM8.6 2.6H14.8V12.2H8.6Z" fill="#fff" stroke="#333338" stroke-width="1.1"/><path d="M8 2V13" stroke="#333338" stroke-width="1.4"/></svg>
<svg style="left:1667px;top:229px;" width="16" height="16" viewBox="0 0 16 16"><path d="M6.4 3V1.6H10.4Q13.6 1.6 13.6 5V11.6" fill="none" stroke="#333338" stroke-width="1"/><path d="M4.4 4.6V3.2H9Q11.8 3.2 11.8 6V13.2" fill="none" stroke="#333338" stroke-width="1"/><path d="M2.2 5H7.6L9.8 7.2V14.8H2.2Z" fill="#fff" stroke="#333338" stroke-width="1.2"/><path d="M3.8 8.6H8M3.8 10.6H8M3.8 12.6H6.6" stroke="#333338" stroke-width="0.9"/></svg>
<svg style="left:1636px;top:506px;" width="16" height="16" viewBox="0 0 16 16"><path d="M2 3.6H7.6V13.2H2ZM9 3.6H14.6V13.2H9Z" fill="none" stroke="#333338" stroke-width="1.1"/><path d="M8.3 3V14.2" stroke="#333338" stroke-width="1.4"/><rect x="0" y="0" width="6.4" height="6.2" fill="#eeeef2"/><path d="M3.2 0.4V6M0.4 3.2H6" stroke="#2f8a32" stroke-width="1.8"/></svg>
<svg style="left:1658px;top:506px;" width="16" height="16" viewBox="0 0 16 16"><path d="M1 7.6Q1 6.4 4 6.4Q7 6.4 7 7.6V13.4Q7 14.6 4 14.6Q1 14.6 1 13.4Z" fill="#a4a4aa"/><ellipse cx="4" cy="7.8" rx="2.4" ry="0.8" fill="#dcdce0"/><path d="M4.6 4.6V1.8M3 3.2L4.6 1.4L6.2 3.2" fill="none" stroke="#a4a4aa" stroke-width="1"/><rect x="8.4" y="1.4" width="2.8" height="3.2" fill="none" stroke="#a4a4aa" stroke-width="0.9"/><rect x="11.6" y="1.4" width="2.8" height="3.2" fill="none" stroke="#a4a4aa" stroke-width="0.9"/><path d="M14 9V12.4H10.4M11.8 11L10.2 12.4L11.8 13.8" fill="none" stroke="#a4a4aa" stroke-width="1"/></svg>
<svg style="left:1679px;top:506px;" width="16" height="16" viewBox="0 0 16 16"><path d="M1.6 8V2.4H7V7M8.4 2.4H14.4V11.2H8.4" fill="none" stroke="#a4a4aa" stroke-width="1"/><circle cx="4.4" cy="11.6" r="3.9" fill="#a4a4aa"/><path d="M2.4000000000000004 13.4V10.6H6.4V13.4M4.4 10.6V13.4" fill="none" stroke="#fff" stroke-width="0.9"/></svg>
<svg style="left:1708px;top:506px;" width="16" height="16" viewBox="0 0 16 16"><path d="M2 3.6H7.6V13.2H2ZM9 3.6H14.6V13.2H9Z" fill="none" stroke="#a4a4aa" stroke-width="1.1"/><path d="M8.3 3V14.2" stroke="#a4a4aa" stroke-width="1.4"/><rect x="0" y="0.6" width="7" height="4" fill="#eeeef2"/><path d="M0.8 2.4H6" stroke="#a4a4aa" stroke-width="1.6"/></svg>
<svg style="left:1729.5px;top:506.5px;" width="16" height="16" viewBox="0 0 16 16"><rect x="5.8" y="1.4" width="5" height="3.6" fill="#fff" stroke="#333338" stroke-width="1.2"/><rect x="5.8" y="1.4" width="5" height="1.6" fill="#333338"/><path d="M8.3 5.0V8.0M3.9 10.4V8.0H12.7V10.4" fill="none" stroke="#333338" stroke-width="1.2"/><rect x="1.4" y="10.4" width="5" height="3.8" fill="#fff" stroke="#333338" stroke-width="1.3"/><rect x="10.2" y="10.4" width="5" height="3.8" fill="#fff" stroke="#333338" stroke-width="1.3"/><rect x="0" y="0" width="5.6" height="5.8" fill="#eeeef2"/><path d="M0.6 0.6L5 5.4M5 0.6L0.6 5.4" stroke="#c2281e" stroke-width="1.2"/></svg>
<svg style="left:1758px;top:506px;" width="16" height="16" viewBox="0 0 16 16"><rect x="7.6" y="2" width="6.8" height="4.6" fill="#eeeef2" stroke="#a4a4aa" stroke-width="1"/><rect x="7.6" y="2" width="6.8" height="2" fill="#a4a4aa"/><path d="M12.4 6.6V10.6H9" fill="none" stroke="#a4a4aa" stroke-width="1"/><rect x="2" y="9.4" width="7" height="4.8" fill="#eeeef2" stroke="#a4a4aa" stroke-width="1"/><rect x="2" y="9.4" width="7" height="2" fill="#a4a4aa"/><path d="M3.4 1V6.6M0.6 3.8H6.2" stroke="#a4a4aa" stroke-width="1.6"/></svg>
<svg style="left:1780px;top:506px;" width="16" height="16" viewBox="0 0 16 16"><rect x="7.6" y="2" width="6.8" height="4.6" fill="#eeeef2" stroke="#a4a4aa" stroke-width="1"/><rect x="7.6" y="2" width="6.8" height="2" fill="#a4a4aa"/><path d="M12.4 6.6V10.6H9" fill="none" stroke="#a4a4aa" stroke-width="1"/><rect x="2" y="9.4" width="7" height="4.8" fill="#eeeef2" stroke="#a4a4aa" stroke-width="1"/><rect x="2" y="9.4" width="7" height="2" fill="#a4a4aa"/><path d="M0.8 3.8H6.2" stroke="#a4a4aa" stroke-width="1.6"/></svg>
<svg style="left:1652px;top:534.5px;" width="16" height="16" viewBox="0 0 16 16"><rect x="5.2" y="1" width="5" height="3.6" fill="#fff" stroke="#333338" stroke-width="1.2"/><rect x="5.2" y="1" width="5" height="1.6" fill="#333338"/><path d="M7.7 4.6V7.6M3.3 10V7.6H12.1V10" fill="none" stroke="#333338" stroke-width="1.2"/><rect x="0.8" y="10" width="5" height="3.8" fill="#fff" stroke="#333338" stroke-width="1.3"/><rect x="9.6" y="10" width="5" height="3.8" fill="#fff" stroke="#333338" stroke-width="1.3"/></svg>
<svg style="left:1652px;top:570.5px;" width="16" height="16" viewBox="0 0 16 16"><rect x="5.2" y="1" width="5" height="3.6" fill="#fff" stroke="#333338" stroke-width="1.2"/><rect x="5.2" y="1" width="5" height="1.6" fill="#333338"/><path d="M7.7 4.6V7.6M3.3 10V7.6H12.1V10" fill="none" stroke="#333338" stroke-width="1.2"/><rect x="0.8" y="10" width="5" height="3.8" fill="#fff" stroke="#333338" stroke-width="1.3"/><rect x="9.6" y="10" width="5" height="3.8" fill="#fff" stroke="#333338" stroke-width="1.3"/></svg>
<svg style="left:1667px;top:553px;" width="16" height="16" viewBox="0 0 16 16"><path d="M2.6 7V1.8H7.4V6M8.8 1.8H14.4V10.6H9" fill="none" stroke="#333338" stroke-width="1.1"/><circle cx="4.2" cy="11" r="3.9" fill="#333338"/><path d="M2.2 12.8V10H6.2V12.8M4.2 10V12.8" fill="none" stroke="#fff" stroke-width="0.9"/></svg>
<svg style="left:1638px;top:1038px;" width="16" height="14" viewBox="0 0 16 14"><rect x="4.6" y="0.8" width="9.4" height="11.6" fill="#fff" stroke="#333338" stroke-width="1"/><path d="M6.2 3.2H8.6M9.8 3.2H12.6M6.2 5.4H8.6M9.8 5.4H12.6M6.2 7.6H8.6M9.8 7.6H12.6M6.2 9.8H8.6M9.8 9.8H12.6" stroke="#333338" stroke-width="1.1"/><path d="M1 6.4V8.8Q1 9.8 2 10V13.4H3.6V10Q4.6 9.8 4.6 8.8V6.4H3.6V8.4H2V6.4Z" fill="#333338" stroke="#eeeef2" stroke-width="0.4"/></svg>
<svg style="left:1770px;top:1038px;" width="16" height="15" viewBox="0 0 16 15"><path d="M7.4 1.4Q7.4 0.4 10.6 0.4Q13.8 0.4 13.8 1.4V8.6Q13.8 9.8 10.6 9.8Q7.4 9.8 7.4 8.6Z" fill="#3a3a40"/><ellipse cx="10.6" cy="1.7" rx="2.6" ry="0.8" fill="#dcdce0"/><rect x="3" y="4.8" width="3.2" height="2.4" fill="#333338"/><path d="M4.6 7.2V9.8M1.8 12V9.8H7.6V12" fill="none" stroke="#333338" stroke-width="1"/><rect x="0.4" y="11.6" width="2.8" height="2.6" fill="#333338"/><rect x="6.2" y="11.6" width="2.8" height="2.6" fill="#333338"/></svg>
<div style="left:0px;top:1058px;width:1920px;height:22px;background:#007acc;"></div>
<div style="left:0px;top:1078px;width:1920px;height:2px;background:#1d4f8f;"></div>
<span style="left:4px;top:1062.20px;font-size:12px;line-height:16px;color:#fff;letter-spacing:0.032px;">C:\projects\WebListDemo\AppSrc\RowLayoutDemo.wo</span>
<span style="left:1537px;top:1061.50px;font-size:12px;line-height:16px;color:#fff;letter-spacing:-0.257px;">Ln 76</span>
<span style="left:1577px;top:1061.50px;font-size:12px;line-height:16px;color:#fff;letter-spacing:-0.137px;">Col 39</span>
<svg style="left:1758px;top:1061px;" width="18" height="18" viewBox="0 0 18 18"><circle cx="9" cy="9" r="6.6" fill="#8b9097" stroke="#fff" stroke-width="1.8"/><path d="M4.5 4.5L13.5 13.5" stroke="#fff" stroke-width="1.8"/></svg>
<span style="left:1793px;top:1061.50px;font-size:12px;line-height:16px;color:#fff;letter-spacing:-0.502px;">INS</span>
<span style="left:1837px;top:1061.50px;font-size:12px;line-height:16px;color:#55b4f8;letter-spacing:-0.893px;">CAPS</span>
<span style="left:1881px;top:1061.50px;font-size:12px;line-height:16px;color:#fff;letter-spacing:0.836px;">NUM</span>
</div></body></html>
